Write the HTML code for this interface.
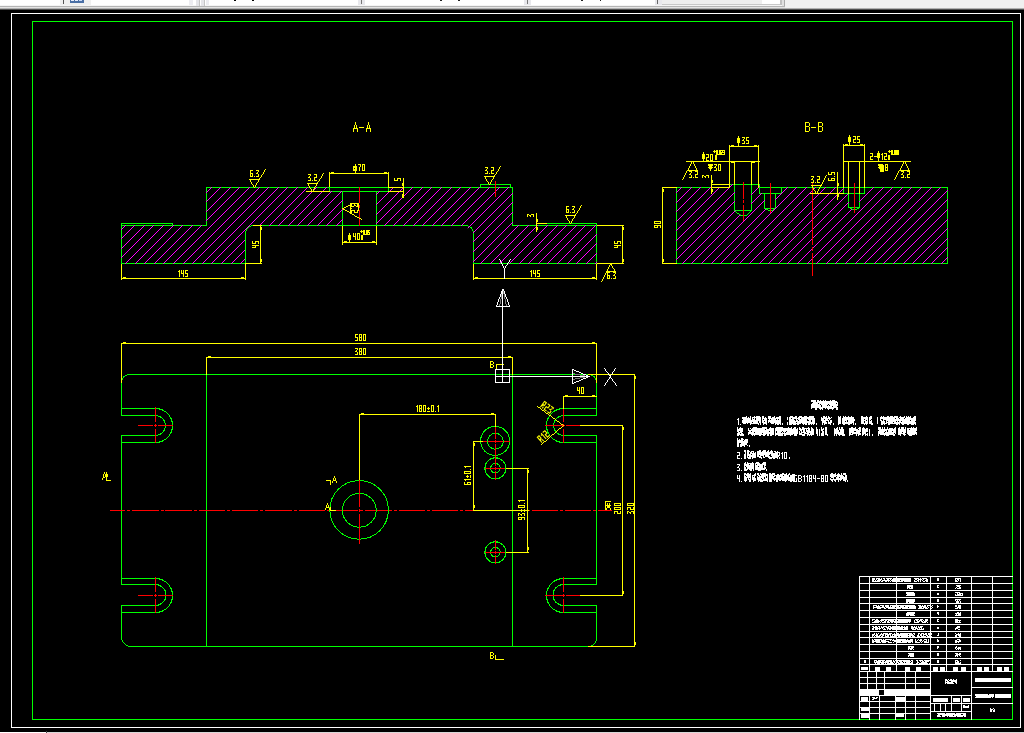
<!DOCTYPE html>
<html><head><meta charset="utf-8"><title>CAD drawing</title>
<style>
html,body{margin:0;padding:0;background:#000;font-family:"Liberation Sans",sans-serif;}
#wrap{position:relative;width:1024px;height:733px;overflow:hidden;background:#000;}
#top{position:absolute;left:0;top:0;width:1024px;height:10px;}
svg{position:absolute;left:0;top:0;}
</style></head><body>
<div id="wrap">
<svg width="1024" height="733" viewBox="0 0 1024 733" shape-rendering="crispEdges" stroke-width="1">
<defs><clipPath id="ca"><path d="M121 225H206V187H330V191H343V226H253L245 234V264H121Z M376 191H388V187H513V225H597V264H473V233L465 226H376Z"/></clipPath><clipPath id="cb"><path clip-rule="evenodd" d="M676 187H729V184H760V187H948V264H676Z M735 184H751V210L746 215H741L735 210Z M760 187H781V193H775V208L770 211L765 208V193H760Z M844 187H864V193H859V207L854 210L849 207V193H844Z"/></clipPath>
<linearGradient id="tg" x1="0" y1="0" x2="0" y2="1"><stop offset="0" stop-color="#fff"/><stop offset="1" stop-color="#fff"/></linearGradient>
</defs>
<rect x="0" y="0" width="1024" height="733" fill="#000"/>
<!-- top toolbar strip -->
<rect x="0" y="0" width="785" height="6" fill="#ffffff"/>
<rect x="785" y="0" width="239" height="8" fill="#f0f0f0"/>
<rect x="0" y="5" width="785" height="1" fill="#f4f4f4"/>
<rect x="0" y="6" width="785" height="1" fill="#b4b4b4"/>
<rect x="0" y="7" width="785" height="1" fill="#e4e4e4"/>
<rect x="0" y="8" width="1024" height="1" fill="#b0b0b0"/>
<rect x="0" y="9" width="1024" height="1" fill="#505050"/>
<rect x="60" y="0" width="31" height="5" fill="#f0f0f0"/>
<rect x="63" y="0" width="1" height="4" fill="#555"/>
<rect x="70" y="0" width="14" height="3" fill="#4a6fa5"/>
<rect x="71" y="0" width="3" height="1" fill="#e8eefc"/><rect x="75" y="0" width="3" height="1" fill="#e8eefc"/><rect x="79" y="0" width="3" height="1" fill="#c8d8f8"/>
<rect x="189" y="0" width="4" height="5" fill="#ececf0"/><rect x="196" y="0" width="3" height="6" fill="#e4e4e8"/><rect x="199" y="0" width="1" height="6" fill="#c4c4c4"/>
<rect x="201" y="0" width="3" height="6" fill="#e4e4e8"/><rect x="204" y="0" width="1" height="6" fill="#c4c4c4"/><rect x="206" y="0" width="3" height="5" fill="#ececf0"/>
<rect x="234" y="0" width="2" height="1" fill="#000"/><rect x="252" y="0" width="2" height="1" fill="#000"/>
<rect x="358" y="0" width="7" height="5" fill="#e8e8ec"/><rect x="361" y="0" width="1" height="4" fill="#777"/>
<rect x="440" y="0" width="2" height="1" fill="#222"/><rect x="458" y="0" width="2" height="1" fill="#222"/>
<rect x="524" y="0" width="7" height="5" fill="#e8e8ec"/><rect x="527" y="0" width="1" height="4" fill="#777"/>
<rect x="581" y="0" width="2" height="1" fill="#222"/><rect x="600" y="0" width="1" height="1" fill="#222"/>
<rect x="655" y="0" width="7" height="5" fill="#e8e8ec"/><rect x="657" y="0" width="1" height="4" fill="#666"/>
<rect x="662" y="0" width="100" height="4" fill="#eeeeee"/><rect x="662" y="4" width="120" height="1" fill="#c8c8c8"/>
<rect x="780" y="0" width="2" height="5" fill="#c0c0c0"/><rect x="782" y="0" width="3" height="6" fill="#e0e0e0"/><rect x="784" y="0" width="1" height="6" fill="#aaa"/>
<!-- bottom row -->
<rect x="0" y="732" width="46" height="1" fill="#ffffff"/><rect x="46" y="731" width="1" height="2" fill="#444"/><rect x="47" y="732" width="977" height="1" fill="#d8d8d8"/>
<!-- frames -->
<rect x="11.5" y="13.5" width="1009" height="714" stroke="#fff" fill="none"/>
<rect x="32.5" y="21.5" width="980" height="698" stroke="#00ff00" fill="none"/>
<rect x="121" y="223" width="52" height="1" fill="#00ff00"/>
<rect x="172" y="223" width="1" height="3" fill="#00ff00"/>
<rect x="121" y="223" width="1" height="41" fill="#00ff00"/>
<rect x="121" y="225" width="86" height="1" fill="#00ff00"/>
<rect x="121" y="263" width="125" height="1" fill="#00ff00"/>
<rect x="245" y="233" width="1" height="31" fill="#00ff00"/>
<path d="M245.5 233.5A8 8 0 0 1 253.5 225.5" stroke="#00ff00" fill="none" />
<rect x="253" y="225" width="213" height="1" fill="#00ff00"/>
<rect x="206" y="187" width="1" height="39" fill="#00ff00"/>
<rect x="206" y="187" width="307" height="1" fill="#00ff00"/>
<rect x="329" y="187" width="1" height="5" fill="#00ff00"/>
<rect x="329" y="191" width="60" height="1" fill="#00ff00"/>
<rect x="388" y="187" width="1" height="5" fill="#00ff00"/>
<rect x="342" y="191" width="1" height="35" fill="#00ff00"/>
<rect x="376" y="191" width="1" height="35" fill="#00ff00"/>
<rect x="480" y="184" width="31" height="1" fill="#00ff00"/>
<rect x="480" y="184" width="1" height="4" fill="#00ff00"/>
<rect x="510" y="184" width="1" height="4" fill="#00ff00"/>
<rect x="512" y="187" width="1" height="39" fill="#00ff00"/>
<rect x="512" y="225" width="85" height="1" fill="#00ff00"/>
<rect x="546" y="223" width="51" height="1" fill="#00ff00"/>
<rect x="596" y="223" width="1" height="41" fill="#00ff00"/>
<rect x="473" y="263" width="124" height="1" fill="#00ff00"/>
<rect x="473" y="233" width="1" height="31" fill="#00ff00"/>
<path d="M473.5 233.5A8 8 0 0 0 465.5 225.5" stroke="#00ff00" fill="none" />
<path clip-path="url(#ca)" fill="#ff00ff" d="M27.4 265h1L110.4 183h-1zM37.0 265h1L120.0 183h-1zM46.6 265h1L129.6 183h-1zM56.2 265h1L139.2 183h-1zM65.8 265h1L148.8 183h-1zM75.4 265h1L158.4 183h-1zM85.0 265h1L168.0 183h-1zM94.6 265h1L177.6 183h-1zM104.2 265h1L187.2 183h-1zM113.8 265h1L196.8 183h-1zM123.4 265h1L206.4 183h-1zM133.0 265h1L216.0 183h-1zM142.6 265h1L225.6 183h-1zM152.2 265h1L235.2 183h-1zM161.8 265h1L244.8 183h-1zM171.4 265h1L254.4 183h-1zM181.0 265h1L264.0 183h-1zM190.6 265h1L273.6 183h-1zM200.2 265h1L283.2 183h-1zM209.8 265h1L292.8 183h-1zM219.4 265h1L302.4 183h-1zM229.0 265h1L312.0 183h-1zM238.6 265h1L321.6 183h-1zM248.2 265h1L331.2 183h-1zM257.8 265h1L340.8 183h-1zM267.4 265h1L350.4 183h-1zM277.0 265h1L360.0 183h-1zM286.6 265h1L369.6 183h-1zM296.2 265h1L379.2 183h-1zM305.8 265h1L388.8 183h-1zM315.4 265h1L398.4 183h-1zM325.0 265h1L408.0 183h-1zM334.6 265h1L417.6 183h-1zM344.2 265h1L427.2 183h-1zM353.8 265h1L436.8 183h-1zM363.4 265h1L446.4 183h-1zM373.0 265h1L456.0 183h-1zM382.6 265h1L465.6 183h-1zM392.2 265h1L475.2 183h-1zM401.8 265h1L484.8 183h-1zM411.4 265h1L494.4 183h-1zM421.0 265h1L504.0 183h-1zM430.6 265h1L513.6 183h-1zM440.2 265h1L523.2 183h-1zM449.8 265h1L532.8 183h-1zM459.4 265h1L542.4 183h-1zM469.0 265h1L552.0 183h-1zM478.6 265h1L561.6 183h-1zM488.2 265h1L571.2 183h-1zM497.8 265h1L580.8 183h-1zM507.4 265h1L590.4 183h-1zM517.0 265h1L600.0 183h-1zM526.6 265h1L609.6 183h-1zM536.2 265h1L619.2 183h-1zM545.8 265h1L628.8 183h-1zM555.4 265h1L638.4 183h-1zM565.0 265h1L648.0 183h-1zM574.6 265h1L657.6 183h-1zM584.2 265h1L667.2 183h-1zM593.8 265h1L676.8 183h-1zM603.4 265h1L686.4 183h-1zM613.0 265h1L696.0 183h-1z"/>
<rect x="359" y="187" width="1" height="16" fill="#ff0000"/>
<rect x="359" y="205" width="1" height="3" fill="#ff0000"/>
<rect x="359" y="210" width="1" height="16" fill="#ff0000"/>
<rect x="495" y="181" width="1" height="16" fill="#ff0000"/>
<rect x="355" y="122" width="1" height="3" fill="#ffff00"/>
<rect x="354" y="125" width="1" height="3" fill="#ffff00"/>
<rect x="356" y="125" width="1" height="3" fill="#ffff00"/>
<rect x="353" y="128" width="5" height="1" fill="#ffff00"/>
<rect x="353" y="129" width="1" height="3" fill="#ffff00"/>
<rect x="357" y="129" width="1" height="3" fill="#ffff00"/>
<rect x="359" y="127" width="5" height="1" fill="#ffff00"/>
<rect x="368" y="122" width="1" height="3" fill="#ffff00"/>
<rect x="367" y="125" width="1" height="3" fill="#ffff00"/>
<rect x="369" y="125" width="1" height="3" fill="#ffff00"/>
<rect x="366" y="128" width="5" height="1" fill="#ffff00"/>
<rect x="366" y="129" width="1" height="3" fill="#ffff00"/>
<rect x="370" y="129" width="1" height="3" fill="#ffff00"/>
<path d="M248.69 179L254.31 188H255.31L249.69 179Z" fill="#ffff00"/>
<path d="M265.31 169L253.69 188H254.69L266.31 169Z" fill="#ffff00"/>
<rect x="249" y="179" width="11" height="1" fill="#ffff00"/>
<path d="M250 170h1v1h-1zM251 170h1v1h-1zM252 170h1v1h-1zM250 171h1v1h-1zM250 172h1v1h-1zM250 173h1v1h-1zM251 173h1v1h-1zM252 173h1v1h-1zM250 174h1v1h-1zM252 174h1v1h-1zM250 175h1v1h-1zM252 175h1v1h-1zM250 176h1v1h-1zM251 176h1v1h-1zM252 176h1v1h-1zM254 176h1v1h-1zM256 170h1v1h-1zM257 170h1v1h-1zM258 170h1v1h-1zM258 171h1v1h-1zM257 172h1v1h-1zM256 173h1v1h-1zM257 173h1v1h-1zM258 174h1v1h-1zM258 175h1v1h-1zM256 176h1v1h-1zM257 176h1v1h-1zM258 176h1v1h-1z" fill="#ffff00"/>
<rect x="306" y="191" width="24" height="1" fill="#ffff00"/>
<path d="M306.69 183L312.31 192H313.31L307.69 183Z" fill="#ffff00"/>
<path d="M323.31 173L311.69 192H312.69L324.31 173Z" fill="#ffff00"/>
<rect x="307" y="183" width="11" height="1" fill="#ffff00"/>
<path d="M308 174h1v1h-1zM309 174h1v1h-1zM310 174h1v1h-1zM310 175h1v1h-1zM309 176h1v1h-1zM308 177h1v1h-1zM309 177h1v1h-1zM310 178h1v1h-1zM310 179h1v1h-1zM308 180h1v1h-1zM309 180h1v1h-1zM310 180h1v1h-1zM312 180h1v1h-1zM314 174h1v1h-1zM315 174h1v1h-1zM316 174h1v1h-1zM316 175h1v1h-1zM316 176h1v1h-1zM314 177h1v1h-1zM315 177h1v1h-1zM316 177h1v1h-1zM314 178h1v1h-1zM314 179h1v1h-1zM314 180h1v1h-1zM315 180h1v1h-1zM316 180h1v1h-1z" fill="#ffff00"/>
<rect x="329" y="172" width="1" height="15" fill="#ffff00"/>
<rect x="388" y="172" width="1" height="15" fill="#ffff00"/>
<rect x="329" y="173" width="60" height="1" fill="#ffff00"/>
<rect x="331" y="172" width="3" height="1" fill="#ffff00"/>
<rect x="384" y="172" width="3" height="1" fill="#ffff00"/>
<rect x="353" y="166" width="4" height="5" fill="#ffff00"/>
<rect x="354" y="168" width="1" height="1" fill="#000"/>
<rect x="355" y="164" width="1" height="10" fill="#ffff00"/>
<path d="M358 164h1v1h-1zM359 164h1v1h-1zM360 164h1v1h-1zM360 165h1v1h-1zM360 166h1v1h-1zM359 167h1v1h-1zM359 168h1v1h-1zM359 169h1v1h-1zM359 170h1v1h-1zM362 164h1v1h-1zM363 164h1v1h-1zM364 164h1v1h-1zM362 165h1v1h-1zM364 165h1v1h-1zM362 166h1v1h-1zM364 166h1v1h-1zM362 167h1v1h-1zM364 167h1v1h-1zM362 168h1v1h-1zM364 168h1v1h-1zM362 169h1v1h-1zM364 169h1v1h-1zM362 170h1v1h-1zM363 170h1v1h-1zM364 170h1v1h-1z" fill="#ffff00"/>
<rect x="403" y="178" width="1" height="20" fill="#ffff00"/>
<rect x="388" y="187" width="16" height="1" fill="#ffff00"/>
<rect x="388" y="191" width="16" height="1" fill="#ffff00"/>
<rect x="402" y="183" width="1" height="3" fill="#ffff00"/>
<rect x="402" y="194" width="1" height="4" fill="#ffff00"/>
<path d="M394 180h1v1h-1zM394 179h1v1h-1zM394 178h1v1h-1zM395 180h1v1h-1zM396 180h1v1h-1zM397 180h1v1h-1zM397 179h1v1h-1zM397 178h1v1h-1zM398 178h1v1h-1zM399 178h1v1h-1zM400 180h1v1h-1zM400 179h1v1h-1zM400 178h1v1h-1z" fill="#ffff00"/>
<path d="M342 208.25L351 203.75V204.75L342 209.25Z" fill="#ffff00"/>
<rect x="350" y="204" width="1" height="10" fill="#ffff00"/>
<path d="M342 207.71L362 219.29V220.29L342 208.71Z" fill="#ffff00"/>
<rect x="350" y="203" width="8" height="1" fill="#ffff00"/>
<path d="M357 204h1v1h-1zM357 205h1v1h-1zM357 206h1v1h-1zM356 206h1v1h-1zM355 205h1v1h-1zM354 204h1v1h-1zM354 205h1v1h-1zM353 206h1v1h-1zM352 206h1v1h-1zM351 204h1v1h-1zM351 205h1v1h-1zM351 206h1v1h-1zM351 208h1v1h-1zM357 210h1v1h-1zM357 211h1v1h-1zM357 212h1v1h-1zM356 212h1v1h-1zM355 212h1v1h-1zM354 210h1v1h-1zM354 211h1v1h-1zM354 212h1v1h-1zM353 210h1v1h-1zM352 210h1v1h-1zM351 210h1v1h-1zM351 211h1v1h-1zM351 212h1v1h-1z" fill="#ffff00"/>
<rect x="358" y="203" width="1" height="8" fill="#ffff00"/>
<rect x="342" y="226" width="1" height="19" fill="#ffff00"/>
<rect x="376" y="226" width="1" height="19" fill="#ffff00"/>
<rect x="342" y="242" width="35" height="1" fill="#ffff00"/>
<rect x="344" y="241" width="3" height="1" fill="#ffff00"/>
<rect x="372" y="241" width="3" height="1" fill="#ffff00"/>
<rect x="348" y="235" width="3" height="5" fill="#ffff00"/>
<rect x="349" y="233" width="1" height="10" fill="#ffff00"/>
<path d="M353 233h1v1h-1zM355 233h1v1h-1zM353 234h1v1h-1zM355 234h1v1h-1zM353 235h1v1h-1zM355 235h1v1h-1zM353 236h1v1h-1zM354 236h1v1h-1zM355 236h1v1h-1zM355 237h1v1h-1zM355 238h1v1h-1zM355 239h1v1h-1zM357 233h1v1h-1zM358 233h1v1h-1zM359 233h1v1h-1zM357 234h1v1h-1zM359 234h1v1h-1zM357 235h1v1h-1zM359 235h1v1h-1zM357 236h1v1h-1zM359 236h1v1h-1zM357 237h1v1h-1zM359 237h1v1h-1zM357 238h1v1h-1zM359 238h1v1h-1zM357 239h1v1h-1zM358 239h1v1h-1zM359 239h1v1h-1z" fill="#ffff00"/>
<path d="M361 235h1v1h-1zM362 235h1v1h-1zM361 236h1v1h-1zM362 236h1v1h-1zM361 237h1v1h-1zM362 237h1v1h-1zM361 238h1v1h-1zM362 238h1v1h-1zM361 239h1v1h-1zM362 239h1v1h-1z" fill="#ffff00"/>
<path d="M361 230h1v1h-1zM360 231h1v1h-1zM361 231h1v1h-1zM362 231h1v1h-1zM361 232h1v1h-1zM363 230h1v1h-1zM364 230h1v1h-1zM363 231h1v1h-1zM364 231h1v1h-1zM363 232h1v1h-1zM364 232h1v1h-1zM363 233h1v1h-1zM364 233h1v1h-1zM363 234h1v1h-1zM364 234h1v1h-1zM365 234h1v1h-1zM366 230h1v1h-1zM367 230h1v1h-1zM366 231h1v1h-1zM367 231h1v1h-1zM366 232h1v1h-1zM367 232h1v1h-1zM366 233h1v1h-1zM367 233h1v1h-1zM366 234h1v1h-1zM367 234h1v1h-1zM368 230h1v1h-1zM369 230h1v1h-1zM368 231h1v1h-1zM368 232h1v1h-1zM369 232h1v1h-1zM369 233h1v1h-1zM368 234h1v1h-1zM369 234h1v1h-1z" fill="#ffff00"/>
<rect x="253" y="225" width="9" height="1" fill="#ffff00"/>
<rect x="245" y="263" width="17" height="1" fill="#ffff00"/>
<rect x="260" y="225" width="1" height="39" fill="#ffff00"/>
<rect x="261" y="227" width="1" height="3" fill="#ffff00"/>
<rect x="261" y="259" width="1" height="3" fill="#ffff00"/>
<path d="M252 247h1v1h-1zM252 245h1v1h-1zM253 247h1v1h-1zM253 245h1v1h-1zM254 247h1v1h-1zM254 245h1v1h-1zM255 247h1v1h-1zM255 246h1v1h-1zM255 245h1v1h-1zM256 245h1v1h-1zM257 245h1v1h-1zM258 245h1v1h-1zM252 243h1v1h-1zM252 242h1v1h-1zM252 241h1v1h-1zM253 243h1v1h-1zM254 243h1v1h-1zM255 243h1v1h-1zM255 242h1v1h-1zM255 241h1v1h-1zM256 241h1v1h-1zM257 241h1v1h-1zM258 243h1v1h-1zM258 242h1v1h-1zM258 241h1v1h-1z" fill="#ffff00"/>
<rect x="121" y="264" width="1" height="16" fill="#ffff00"/>
<rect x="245" y="264" width="1" height="16" fill="#ffff00"/>
<rect x="121" y="278" width="125" height="1" fill="#ffff00"/>
<rect x="123" y="277" width="3" height="1" fill="#ffff00"/>
<rect x="241" y="277" width="3" height="1" fill="#ffff00"/>
<path d="M179 270h1v1h-1zM178 271h1v1h-1zM179 271h1v1h-1zM179 272h1v1h-1zM179 273h1v1h-1zM179 274h1v1h-1zM179 275h1v1h-1zM179 276h1v1h-1zM181 270h1v1h-1zM183 270h1v1h-1zM181 271h1v1h-1zM183 271h1v1h-1zM181 272h1v1h-1zM183 272h1v1h-1zM181 273h1v1h-1zM182 273h1v1h-1zM183 273h1v1h-1zM183 274h1v1h-1zM183 275h1v1h-1zM183 276h1v1h-1zM185 270h1v1h-1zM186 270h1v1h-1zM187 270h1v1h-1zM185 271h1v1h-1zM185 272h1v1h-1zM185 273h1v1h-1zM186 273h1v1h-1zM187 273h1v1h-1zM187 274h1v1h-1zM187 275h1v1h-1zM185 276h1v1h-1zM186 276h1v1h-1zM187 276h1v1h-1z" fill="#ffff00"/>
<path d="M483.69 176L489.31 185H490.31L484.69 176Z" fill="#ffff00"/>
<path d="M500.31 166L488.69 185H489.69L501.31 166Z" fill="#ffff00"/>
<rect x="484" y="176" width="11" height="1" fill="#ffff00"/>
<path d="M485 167h1v1h-1zM486 167h1v1h-1zM487 167h1v1h-1zM487 168h1v1h-1zM486 169h1v1h-1zM485 170h1v1h-1zM486 170h1v1h-1zM487 171h1v1h-1zM487 172h1v1h-1zM485 173h1v1h-1zM486 173h1v1h-1zM487 173h1v1h-1zM489 173h1v1h-1zM491 167h1v1h-1zM492 167h1v1h-1zM493 167h1v1h-1zM493 168h1v1h-1zM493 169h1v1h-1zM491 170h1v1h-1zM492 170h1v1h-1zM493 170h1v1h-1zM491 171h1v1h-1zM491 172h1v1h-1zM491 173h1v1h-1zM492 173h1v1h-1zM493 173h1v1h-1z" fill="#ffff00"/>
<rect x="536" y="213" width="1" height="19" fill="#ffff00"/>
<rect x="536" y="223" width="11" height="1" fill="#ffff00"/>
<path d="M527 216h1v1h-1zM527 215h1v1h-1zM527 214h1v1h-1zM528 214h1v1h-1zM529 215h1v1h-1zM530 216h1v1h-1zM530 215h1v1h-1zM531 214h1v1h-1zM532 214h1v1h-1zM533 216h1v1h-1zM533 215h1v1h-1zM533 214h1v1h-1z" fill="#ffff00"/>
<rect x="537" y="219" width="1" height="3" fill="#ffff00"/>
<rect x="537" y="227" width="1" height="3" fill="#ffff00"/>
<path d="M564.69 215L570.31 224H571.31L565.69 215Z" fill="#ffff00"/>
<path d="M581.31 205L569.69 224H570.69L582.31 205Z" fill="#ffff00"/>
<rect x="565" y="215" width="11" height="1" fill="#ffff00"/>
<path d="M566 206h1v1h-1zM567 206h1v1h-1zM568 206h1v1h-1zM566 207h1v1h-1zM566 208h1v1h-1zM566 209h1v1h-1zM567 209h1v1h-1zM568 209h1v1h-1zM566 210h1v1h-1zM568 210h1v1h-1zM566 211h1v1h-1zM568 211h1v1h-1zM566 212h1v1h-1zM567 212h1v1h-1zM568 212h1v1h-1zM570 212h1v1h-1zM572 206h1v1h-1zM573 206h1v1h-1zM574 206h1v1h-1zM574 207h1v1h-1zM573 208h1v1h-1zM572 209h1v1h-1zM573 209h1v1h-1zM574 210h1v1h-1zM574 211h1v1h-1zM572 212h1v1h-1zM573 212h1v1h-1zM574 212h1v1h-1z" fill="#ffff00"/>
<rect x="597" y="225" width="27" height="1" fill="#ffff00"/>
<rect x="597" y="263" width="27" height="1" fill="#ffff00"/>
<rect x="622" y="225" width="1" height="39" fill="#ffff00"/>
<rect x="623" y="227" width="1" height="3" fill="#ffff00"/>
<rect x="623" y="259" width="1" height="3" fill="#ffff00"/>
<path d="M614 247h1v1h-1zM614 245h1v1h-1zM615 247h1v1h-1zM615 245h1v1h-1zM616 247h1v1h-1zM616 245h1v1h-1zM617 247h1v1h-1zM617 246h1v1h-1zM617 245h1v1h-1zM618 245h1v1h-1zM619 245h1v1h-1zM620 245h1v1h-1zM614 243h1v1h-1zM614 242h1v1h-1zM614 241h1v1h-1zM615 243h1v1h-1zM616 243h1v1h-1zM617 243h1v1h-1zM617 242h1v1h-1zM617 241h1v1h-1zM618 241h1v1h-1zM619 241h1v1h-1zM620 243h1v1h-1zM620 242h1v1h-1zM620 241h1v1h-1z" fill="#ffff00"/>
<rect x="473" y="264" width="1" height="16" fill="#ffff00"/>
<rect x="596" y="264" width="1" height="16" fill="#ffff00"/>
<rect x="473" y="278" width="124" height="1" fill="#ffff00"/>
<rect x="475" y="277" width="3" height="1" fill="#ffff00"/>
<rect x="592" y="277" width="3" height="1" fill="#ffff00"/>
<path d="M531 270h1v1h-1zM530 271h1v1h-1zM531 271h1v1h-1zM531 272h1v1h-1zM531 273h1v1h-1zM531 274h1v1h-1zM531 275h1v1h-1zM531 276h1v1h-1zM533 270h1v1h-1zM535 270h1v1h-1zM533 271h1v1h-1zM535 271h1v1h-1zM533 272h1v1h-1zM535 272h1v1h-1zM533 273h1v1h-1zM534 273h1v1h-1zM535 273h1v1h-1zM535 274h1v1h-1zM535 275h1v1h-1zM535 276h1v1h-1zM537 270h1v1h-1zM538 270h1v1h-1zM539 270h1v1h-1zM537 271h1v1h-1zM537 272h1v1h-1zM537 273h1v1h-1zM538 273h1v1h-1zM539 273h1v1h-1zM539 274h1v1h-1zM539 275h1v1h-1zM537 276h1v1h-1zM538 276h1v1h-1zM539 276h1v1h-1z" fill="#ffff00"/>
<path d="M609.69 263L615.31 272H616.31L610.69 263Z" fill="#ffff00"/>
<path d="M610.25 263L600.75 282H601.75L611.25 263Z" fill="#ffff00"/>
<rect x="606" y="271" width="10" height="1" fill="#ffff00"/>
<path d="M607 272h1v1h-1zM608 272h1v1h-1zM609 272h1v1h-1zM607 273h1v1h-1zM607 274h1v1h-1zM607 275h1v1h-1zM608 275h1v1h-1zM609 275h1v1h-1zM607 276h1v1h-1zM609 276h1v1h-1zM607 277h1v1h-1zM609 277h1v1h-1zM607 278h1v1h-1zM608 278h1v1h-1zM609 278h1v1h-1zM611 278h1v1h-1zM613 272h1v1h-1zM614 272h1v1h-1zM615 272h1v1h-1zM615 273h1v1h-1zM614 274h1v1h-1zM613 275h1v1h-1zM614 275h1v1h-1zM615 276h1v1h-1zM615 277h1v1h-1zM613 278h1v1h-1zM614 278h1v1h-1zM615 278h1v1h-1z" fill="#ffff00"/>
<rect x="676" y="187" width="54" height="1" fill="#00ff00"/>
<rect x="729" y="184" width="1" height="4" fill="#00ff00"/>
<rect x="729" y="184" width="31" height="1" fill="#00ff00"/>
<rect x="759" y="184" width="1" height="4" fill="#00ff00"/>
<rect x="759" y="187" width="189" height="1" fill="#00ff00"/>
<rect x="676" y="187" width="1" height="77" fill="#00ff00"/>
<rect x="947" y="187" width="1" height="77" fill="#00ff00"/>
<rect x="676" y="263" width="272" height="1" fill="#00ff00"/>
<rect x="734" y="184" width="1" height="27" fill="#00ff00"/>
<rect x="751" y="184" width="1" height="27" fill="#00ff00"/>
<rect x="734" y="210" width="18" height="1" fill="#00ff00"/>
<path d="M734 209.58L741 215.42V216.42L734 210.58Z" fill="#00ff00"/>
<rect x="740" y="215" width="7" height="1" fill="#00ff00"/>
<path d="M746 215.50L752 209.50V210.50L746 216.50Z" fill="#00ff00"/>
<rect x="759" y="187" width="1" height="7" fill="#00ff00"/>
<rect x="759" y="193" width="23" height="1" fill="#00ff00"/>
<rect x="781" y="187" width="1" height="7" fill="#00ff00"/>
<rect x="764" y="193" width="1" height="16" fill="#00ff00"/>
<rect x="775" y="193" width="1" height="16" fill="#00ff00"/>
<rect x="764" y="208" width="12" height="1" fill="#00ff00"/>
<path d="M764 207.75L771 211.25V212.25L764 208.75Z" fill="#00ff00"/>
<path d="M770 211.30L776 207.70V208.70L770 212.30Z" fill="#00ff00"/>
<rect x="843" y="187" width="1" height="7" fill="#00ff00"/>
<rect x="864" y="187" width="1" height="7" fill="#00ff00"/>
<rect x="843" y="193" width="22" height="1" fill="#00ff00"/>
<rect x="848" y="193" width="1" height="15" fill="#00ff00"/>
<rect x="859" y="193" width="1" height="15" fill="#00ff00"/>
<rect x="848" y="207" width="12" height="1" fill="#00ff00"/>
<path d="M848 206.75L855 210.25V211.25L848 207.75Z" fill="#00ff00"/>
<path d="M854 210.30L860 206.70V207.70L854 211.30Z" fill="#00ff00"/>
<path clip-path="url(#cb)" fill="#ff00ff" d="M584.2 265h1L667.2 183h-1zM593.8 265h1L676.8 183h-1zM603.4 265h1L686.4 183h-1zM613.0 265h1L696.0 183h-1zM622.6 265h1L705.6 183h-1zM632.2 265h1L715.2 183h-1zM641.8 265h1L724.8 183h-1zM651.4 265h1L734.4 183h-1zM661.0 265h1L744.0 183h-1zM670.6 265h1L753.6 183h-1zM680.2 265h1L763.2 183h-1zM689.8 265h1L772.8 183h-1zM699.4 265h1L782.4 183h-1zM709.0 265h1L792.0 183h-1zM718.6 265h1L801.6 183h-1zM728.2 265h1L811.2 183h-1zM737.8 265h1L820.8 183h-1zM747.4 265h1L830.4 183h-1zM757.0 265h1L840.0 183h-1zM766.6 265h1L849.6 183h-1zM776.2 265h1L859.2 183h-1zM785.8 265h1L868.8 183h-1zM795.4 265h1L878.4 183h-1zM805.0 265h1L888.0 183h-1zM814.6 265h1L897.6 183h-1zM824.2 265h1L907.2 183h-1zM833.8 265h1L916.8 183h-1zM843.4 265h1L926.4 183h-1zM853.0 265h1L936.0 183h-1zM862.6 265h1L945.6 183h-1zM872.2 265h1L955.2 183h-1zM881.8 265h1L964.8 183h-1zM891.4 265h1L974.4 183h-1zM901.0 265h1L984.0 183h-1zM910.6 265h1L993.6 183h-1zM920.2 265h1L1003.2 183h-1zM929.8 265h1L1012.8 183h-1zM939.4 265h1L1022.4 183h-1zM949.0 265h1L1032.0 183h-1zM958.6 265h1L1041.6 183h-1z"/>
<rect x="743" y="182" width="1" height="17" fill="#ff0000"/>
<rect x="743" y="200" width="1" height="3" fill="#ff0000"/>
<rect x="743" y="205" width="1" height="16" fill="#ff0000"/>
<rect x="770" y="183" width="1" height="30" fill="#ff0000"/>
<rect x="854" y="183" width="1" height="30" fill="#ff0000"/>
<rect x="812" y="182" width="1" height="63" fill="#ff0000"/>
<rect x="812" y="247" width="1" height="4" fill="#ff0000"/>
<rect x="812" y="253" width="1" height="23" fill="#ff0000"/>
<rect x="805" y="122" width="1" height="10" fill="#ffff00"/>
<rect x="806" y="122" width="3" height="1" fill="#ffff00"/>
<rect x="809" y="123" width="1" height="3" fill="#ffff00"/>
<rect x="806" y="126" width="3" height="1" fill="#ffff00"/>
<rect x="809" y="127" width="1" height="4" fill="#ffff00"/>
<rect x="806" y="131" width="3" height="1" fill="#ffff00"/>
<rect x="811" y="127" width="5" height="1" fill="#ffff00"/>
<rect x="818" y="122" width="1" height="10" fill="#ffff00"/>
<rect x="819" y="122" width="3" height="1" fill="#ffff00"/>
<rect x="822" y="123" width="1" height="3" fill="#ffff00"/>
<rect x="819" y="126" width="3" height="1" fill="#ffff00"/>
<rect x="822" y="127" width="1" height="4" fill="#ffff00"/>
<rect x="819" y="131" width="3" height="1" fill="#ffff00"/>
<rect x="662" y="187" width="15" height="1" fill="#ffff00"/>
<rect x="662" y="263" width="15" height="1" fill="#ffff00"/>
<rect x="662" y="187" width="1" height="77" fill="#ffff00"/>
<rect x="663" y="189" width="1" height="3" fill="#ffff00"/>
<rect x="663" y="259" width="1" height="3" fill="#ffff00"/>
<path d="M654 227h1v1h-1zM654 226h1v1h-1zM654 225h1v1h-1zM655 227h1v1h-1zM655 225h1v1h-1zM656 227h1v1h-1zM656 225h1v1h-1zM657 227h1v1h-1zM657 226h1v1h-1zM657 225h1v1h-1zM658 225h1v1h-1zM659 225h1v1h-1zM660 227h1v1h-1zM660 226h1v1h-1zM660 225h1v1h-1zM654 223h1v1h-1zM654 222h1v1h-1zM654 221h1v1h-1zM655 223h1v1h-1zM655 221h1v1h-1zM656 223h1v1h-1zM656 221h1v1h-1zM657 223h1v1h-1zM657 221h1v1h-1zM658 223h1v1h-1zM658 221h1v1h-1zM659 223h1v1h-1zM659 221h1v1h-1zM660 223h1v1h-1zM660 222h1v1h-1zM660 221h1v1h-1z" fill="#ffff00"/>
<rect x="729" y="145" width="1" height="43" fill="#ffff00"/>
<rect x="758" y="145" width="1" height="43" fill="#ffff00"/>
<rect x="729" y="146" width="30" height="1" fill="#ffff00"/>
<rect x="731" y="145" width="3" height="1" fill="#ffff00"/>
<rect x="754" y="145" width="3" height="1" fill="#ffff00"/>
<rect x="737" y="138" width="3" height="5" fill="#ffff00"/>
<rect x="738" y="136" width="1" height="11" fill="#ffff00"/>
<path d="M742 137h1v1h-1zM743 137h1v1h-1zM744 137h1v1h-1zM744 138h1v1h-1zM743 139h1v1h-1zM742 140h1v1h-1zM743 140h1v1h-1zM744 141h1v1h-1zM744 142h1v1h-1zM742 143h1v1h-1zM743 143h1v1h-1zM744 143h1v1h-1zM746 137h1v1h-1zM747 137h1v1h-1zM748 137h1v1h-1zM746 138h1v1h-1zM746 139h1v1h-1zM746 140h1v1h-1zM747 140h1v1h-1zM748 140h1v1h-1zM748 141h1v1h-1zM748 142h1v1h-1zM746 143h1v1h-1zM747 143h1v1h-1zM748 143h1v1h-1z" fill="#ffff00"/>
<rect x="686" y="161" width="74" height="1" fill="#ffff00"/>
<rect x="734" y="161" width="1" height="24" fill="#ffff00"/>
<rect x="751" y="161" width="1" height="24" fill="#ffff00"/>
<rect x="731" y="162" width="3" height="1" fill="#ffff00"/>
<rect x="752" y="162" width="3" height="1" fill="#ffff00"/>
<rect x="702" y="154" width="3" height="5" fill="#ffff00"/>
<rect x="703" y="152" width="1" height="10" fill="#ffff00"/>
<path d="M706 154h1v1h-1zM707 154h1v1h-1zM708 154h1v1h-1zM708 155h1v1h-1zM708 156h1v1h-1zM706 157h1v1h-1zM707 157h1v1h-1zM708 157h1v1h-1zM706 158h1v1h-1zM706 159h1v1h-1zM706 160h1v1h-1zM707 160h1v1h-1zM708 160h1v1h-1zM710 154h1v1h-1zM711 154h1v1h-1zM712 154h1v1h-1zM710 155h1v1h-1zM712 155h1v1h-1zM710 156h1v1h-1zM712 156h1v1h-1zM710 157h1v1h-1zM712 157h1v1h-1zM710 158h1v1h-1zM712 158h1v1h-1zM710 159h1v1h-1zM712 159h1v1h-1zM710 160h1v1h-1zM711 160h1v1h-1zM712 160h1v1h-1z" fill="#ffff00"/>
<path d="M715 155h1v1h-1zM716 155h1v1h-1zM715 156h1v1h-1zM716 156h1v1h-1zM715 157h1v1h-1zM716 157h1v1h-1zM715 158h1v1h-1zM716 158h1v1h-1zM715 159h1v1h-1zM716 159h1v1h-1z" fill="#ffff00"/>
<path d="M714 150h1v1h-1zM713 151h1v1h-1zM714 151h1v1h-1zM715 151h1v1h-1zM714 152h1v1h-1zM716 150h1v1h-1zM717 150h1v1h-1zM716 151h1v1h-1zM717 151h1v1h-1zM716 152h1v1h-1zM717 152h1v1h-1zM716 153h1v1h-1zM717 153h1v1h-1zM716 154h1v1h-1zM717 154h1v1h-1zM718 154h1v1h-1zM719 150h1v1h-1zM720 150h1v1h-1zM719 151h1v1h-1zM720 151h1v1h-1zM719 152h1v1h-1zM720 152h1v1h-1zM719 153h1v1h-1zM720 153h1v1h-1zM719 154h1v1h-1zM720 154h1v1h-1zM721 150h1v1h-1zM722 150h1v1h-1zM722 151h1v1h-1zM721 152h1v1h-1zM722 152h1v1h-1zM721 153h1v1h-1zM721 154h1v1h-1zM722 154h1v1h-1zM723 150h1v1h-1zM724 150h1v1h-1zM724 151h1v1h-1zM723 152h1v1h-1zM724 152h1v1h-1zM724 153h1v1h-1zM723 154h1v1h-1zM724 154h1v1h-1z" fill="#ffff00"/>
<path d="M708 164h1v1h-1zM709 164h1v1h-1zM710 164h1v1h-1zM711 164h1v1h-1zM712 164h1v1h-1zM708 165h1v1h-1zM709 165h1v1h-1zM710 165h1v1h-1zM711 165h1v1h-1zM712 165h1v1h-1zM709 166h1v1h-1zM710 166h1v1h-1zM711 166h1v1h-1zM708 167h1v1h-1zM709 167h1v1h-1zM710 167h1v1h-1zM711 167h1v1h-1zM712 167h1v1h-1zM709 168h1v1h-1zM710 168h1v1h-1zM711 168h1v1h-1zM710 169h1v1h-1zM710 170h1v1h-1z" fill="#ffff00"/>
<path d="M714 164h1v1h-1zM715 164h1v1h-1zM716 164h1v1h-1zM716 165h1v1h-1zM715 166h1v1h-1zM714 167h1v1h-1zM715 167h1v1h-1zM716 168h1v1h-1zM716 169h1v1h-1zM714 170h1v1h-1zM715 170h1v1h-1zM716 170h1v1h-1zM718 164h1v1h-1zM719 164h1v1h-1zM720 164h1v1h-1zM718 165h1v1h-1zM720 165h1v1h-1zM718 166h1v1h-1zM720 166h1v1h-1zM718 167h1v1h-1zM720 167h1v1h-1zM718 168h1v1h-1zM720 168h1v1h-1zM718 169h1v1h-1zM720 169h1v1h-1zM718 170h1v1h-1zM719 170h1v1h-1zM720 170h1v1h-1z" fill="#ffff00"/>
<path d="M691.72 161L697.28 171H698.28L692.72 161Z" fill="#ffff00"/>
<path d="M692.28 161L681.72 180H682.72L693.28 161Z" fill="#ffff00"/>
<rect x="688" y="170" width="10" height="1" fill="#ffff00"/>
<path d="M689 171h1v1h-1zM690 171h1v1h-1zM691 171h1v1h-1zM691 172h1v1h-1zM690 173h1v1h-1zM689 174h1v1h-1zM690 174h1v1h-1zM691 175h1v1h-1zM691 176h1v1h-1zM689 177h1v1h-1zM690 177h1v1h-1zM691 177h1v1h-1zM693 177h1v1h-1zM695 171h1v1h-1zM696 171h1v1h-1zM697 171h1v1h-1zM697 172h1v1h-1zM697 173h1v1h-1zM695 174h1v1h-1zM696 174h1v1h-1zM697 174h1v1h-1zM695 175h1v1h-1zM695 176h1v1h-1zM695 177h1v1h-1zM696 177h1v1h-1zM697 177h1v1h-1z" fill="#ffff00"/>
<rect x="711" y="175" width="1" height="19" fill="#ffff00"/>
<rect x="711" y="184" width="19" height="1" fill="#ffff00"/>
<rect x="711" y="187" width="19" height="1" fill="#ffff00"/>
<path d="M702 177h1v1h-1zM702 176h1v1h-1zM702 175h1v1h-1zM703 175h1v1h-1zM704 176h1v1h-1zM705 177h1v1h-1zM705 176h1v1h-1zM706 175h1v1h-1zM707 175h1v1h-1zM708 177h1v1h-1zM708 176h1v1h-1zM708 175h1v1h-1z" fill="#ffff00"/>
<rect x="712" y="180" width="1" height="3" fill="#ffff00"/>
<rect x="712" y="189" width="1" height="3" fill="#ffff00"/>
<rect x="843" y="144" width="1" height="44" fill="#ffff00"/>
<rect x="864" y="144" width="1" height="44" fill="#ffff00"/>
<rect x="843" y="145" width="22" height="1" fill="#ffff00"/>
<rect x="845" y="144" width="3" height="1" fill="#ffff00"/>
<rect x="860" y="144" width="3" height="1" fill="#ffff00"/>
<rect x="848" y="137" width="3" height="5" fill="#ffff00"/>
<rect x="849" y="135" width="1" height="11" fill="#ffff00"/>
<path d="M853 136h1v1h-1zM854 136h1v1h-1zM855 136h1v1h-1zM855 137h1v1h-1zM855 138h1v1h-1zM853 139h1v1h-1zM854 139h1v1h-1zM855 139h1v1h-1zM853 140h1v1h-1zM853 141h1v1h-1zM853 142h1v1h-1zM854 142h1v1h-1zM855 142h1v1h-1zM857 136h1v1h-1zM858 136h1v1h-1zM859 136h1v1h-1zM857 137h1v1h-1zM857 138h1v1h-1zM857 139h1v1h-1zM858 139h1v1h-1zM859 139h1v1h-1zM859 140h1v1h-1zM859 141h1v1h-1zM857 142h1v1h-1zM858 142h1v1h-1zM859 142h1v1h-1z" fill="#ffff00"/>
<rect x="843" y="161" width="68" height="1" fill="#ffff00"/>
<rect x="848" y="161" width="1" height="33" fill="#ffff00"/>
<rect x="859" y="161" width="1" height="33" fill="#ffff00"/>
<path d="M870 153h1v1h-1zM871 153h1v1h-1zM872 153h1v1h-1zM872 154h1v1h-1zM872 155h1v1h-1zM870 156h1v1h-1zM871 156h1v1h-1zM872 156h1v1h-1zM870 157h1v1h-1zM870 158h1v1h-1zM870 159h1v1h-1zM871 159h1v1h-1zM872 159h1v1h-1z" fill="#ffff00"/>
<rect x="874" y="156" width="3" height="1" fill="#ffff00"/>
<rect x="877" y="153" width="3" height="5" fill="#ffff00"/>
<rect x="878" y="151" width="1" height="11" fill="#ffff00"/>
<path d="M882 153h1v1h-1zM881 154h1v1h-1zM882 154h1v1h-1zM882 155h1v1h-1zM882 156h1v1h-1zM882 157h1v1h-1zM882 158h1v1h-1zM882 159h1v1h-1zM884 153h1v1h-1zM885 153h1v1h-1zM886 153h1v1h-1zM886 154h1v1h-1zM886 155h1v1h-1zM884 156h1v1h-1zM885 156h1v1h-1zM886 156h1v1h-1zM884 157h1v1h-1zM884 158h1v1h-1zM884 159h1v1h-1zM885 159h1v1h-1zM886 159h1v1h-1z" fill="#ffff00"/>
<path d="M888 155h1v1h-1zM889 155h1v1h-1zM888 156h1v1h-1zM889 156h1v1h-1zM888 157h1v1h-1zM889 157h1v1h-1zM888 158h1v1h-1zM889 158h1v1h-1zM888 159h1v1h-1zM889 159h1v1h-1z" fill="#ffff00"/>
<path d="M889 150h1v1h-1zM888 151h1v1h-1zM889 151h1v1h-1zM890 151h1v1h-1zM889 152h1v1h-1zM891 150h1v1h-1zM892 150h1v1h-1zM891 151h1v1h-1zM892 151h1v1h-1zM891 152h1v1h-1zM892 152h1v1h-1zM891 153h1v1h-1zM892 153h1v1h-1zM891 154h1v1h-1zM892 154h1v1h-1zM893 154h1v1h-1zM894 150h1v1h-1zM895 150h1v1h-1zM894 151h1v1h-1zM895 151h1v1h-1zM894 152h1v1h-1zM895 152h1v1h-1zM894 153h1v1h-1zM895 153h1v1h-1zM894 154h1v1h-1zM895 154h1v1h-1zM896 150h1v1h-1zM896 151h1v1h-1zM896 152h1v1h-1zM896 153h1v1h-1zM896 154h1v1h-1zM897 150h1v1h-1zM898 150h1v1h-1zM897 151h1v1h-1zM898 151h1v1h-1zM897 152h1v1h-1zM898 152h1v1h-1zM897 153h1v1h-1zM898 153h1v1h-1zM897 154h1v1h-1zM898 154h1v1h-1z" fill="#ffff00"/>
<path d="M878 164h1v1h-1zM879 164h1v1h-1zM880 164h1v1h-1zM881 164h1v1h-1zM882 164h1v1h-1zM878 165h1v1h-1zM879 165h1v1h-1zM880 165h1v1h-1zM881 165h1v1h-1zM882 165h1v1h-1zM879 166h1v1h-1zM880 166h1v1h-1zM881 166h1v1h-1zM878 167h1v1h-1zM879 167h1v1h-1zM880 167h1v1h-1zM881 167h1v1h-1zM882 167h1v1h-1zM879 168h1v1h-1zM880 168h1v1h-1zM881 168h1v1h-1zM880 169h1v1h-1zM880 170h1v1h-1z" fill="#ffff00"/>
<rect x="880" y="165" width="4" height="7" fill="#ffff00"/>
<path d="M885 164h1v1h-1zM886 164h1v1h-1zM887 164h1v1h-1zM885 165h1v1h-1zM887 165h1v1h-1zM885 166h1v1h-1zM887 166h1v1h-1zM885 167h1v1h-1zM886 167h1v1h-1zM887 167h1v1h-1zM885 168h1v1h-1zM887 168h1v1h-1zM885 169h1v1h-1zM887 169h1v1h-1zM885 170h1v1h-1zM886 170h1v1h-1zM887 170h1v1h-1z" fill="#ffff00"/>
<path d="M903.72 161L909.28 171H910.28L904.72 161Z" fill="#ffff00"/>
<path d="M904.28 161L893.72 180H894.72L905.28 161Z" fill="#ffff00"/>
<rect x="900" y="170" width="10" height="1" fill="#ffff00"/>
<path d="M901 171h1v1h-1zM902 171h1v1h-1zM903 171h1v1h-1zM903 172h1v1h-1zM902 173h1v1h-1zM901 174h1v1h-1zM902 174h1v1h-1zM903 175h1v1h-1zM903 176h1v1h-1zM901 177h1v1h-1zM902 177h1v1h-1zM903 177h1v1h-1zM905 177h1v1h-1zM907 171h1v1h-1zM908 171h1v1h-1zM909 171h1v1h-1zM909 172h1v1h-1zM909 173h1v1h-1zM907 174h1v1h-1zM908 174h1v1h-1zM909 174h1v1h-1zM907 175h1v1h-1zM907 176h1v1h-1zM907 177h1v1h-1zM908 177h1v1h-1zM909 177h1v1h-1z" fill="#ffff00"/>
<rect x="810" y="193" width="34" height="1" fill="#ffff00"/>
<path d="M810.69 185L816.31 194H817.31L811.69 185Z" fill="#ffff00"/>
<path d="M826.28 175L815.72 194H816.72L827.28 175Z" fill="#ffff00"/>
<rect x="811" y="185" width="11" height="1" fill="#ffff00"/>
<path d="M811 176h1v1h-1zM812 176h1v1h-1zM813 176h1v1h-1zM813 177h1v1h-1zM812 178h1v1h-1zM811 179h1v1h-1zM812 179h1v1h-1zM813 180h1v1h-1zM813 181h1v1h-1zM811 182h1v1h-1zM812 182h1v1h-1zM813 182h1v1h-1zM815 182h1v1h-1zM817 176h1v1h-1zM818 176h1v1h-1zM819 176h1v1h-1zM819 177h1v1h-1zM819 178h1v1h-1zM817 179h1v1h-1zM818 179h1v1h-1zM819 179h1v1h-1zM817 180h1v1h-1zM817 181h1v1h-1zM817 182h1v1h-1zM818 182h1v1h-1zM819 182h1v1h-1z" fill="#ffff00"/>
<rect x="837" y="172" width="1" height="28" fill="#ffff00"/>
<path d="M828 180h1v1h-1zM828 179h1v1h-1zM828 178h1v1h-1zM829 180h1v1h-1zM830 180h1v1h-1zM831 180h1v1h-1zM831 179h1v1h-1zM831 178h1v1h-1zM832 180h1v1h-1zM832 178h1v1h-1zM833 180h1v1h-1zM833 178h1v1h-1zM834 180h1v1h-1zM834 179h1v1h-1zM834 178h1v1h-1zM834 176h1v1h-1zM828 174h1v1h-1zM828 173h1v1h-1zM828 172h1v1h-1zM829 174h1v1h-1zM830 174h1v1h-1zM831 174h1v1h-1zM831 173h1v1h-1zM831 172h1v1h-1zM832 172h1v1h-1zM833 172h1v1h-1zM834 174h1v1h-1zM834 173h1v1h-1zM834 172h1v1h-1z" fill="#ffff00"/>
<rect x="838" y="183" width="1" height="3" fill="#ffff00"/>
<rect x="838" y="194" width="1" height="3" fill="#ffff00"/>
<path d="M121.5 382.5A8 8 0 0 1 129.5 374.5H588.5A8 8 0 0 1 596.5 382.5" stroke="#00ff00" fill="none" />
<path d="M121.5 637A9.5 9.5 0 0 0 131 646.5H588.5A8 8 0 0 0 596.5 638.5" stroke="#00ff00" fill="none" />
<rect x="121" y="382" width="1" height="34" fill="#00ff00"/>
<rect x="121" y="435" width="1" height="150" fill="#00ff00"/>
<rect x="121" y="605" width="1" height="33" fill="#00ff00"/>
<rect x="596" y="382" width="1" height="34" fill="#00ff00"/>
<rect x="596" y="435" width="1" height="150" fill="#00ff00"/>
<rect x="596" y="605" width="1" height="34" fill="#00ff00"/>
<rect x="206" y="374" width="1" height="273" fill="#00ff00"/>
<rect x="512" y="374" width="1" height="273" fill="#00ff00"/>
<rect x="121" y="408" width="35" height="1" fill="#00ff00"/>
<rect x="563" y="408" width="34" height="1" fill="#00ff00"/>
<rect x="121" y="415" width="35" height="1" fill="#00ff00"/>
<rect x="563" y="415" width="34" height="1" fill="#00ff00"/>
<rect x="121" y="435" width="35" height="1" fill="#00ff00"/>
<rect x="563" y="435" width="34" height="1" fill="#00ff00"/>
<rect x="121" y="442" width="35" height="1" fill="#00ff00"/>
<rect x="563" y="442" width="34" height="1" fill="#00ff00"/>
<path d="M155.5 408.5A17 17 0 0 1 155.5 442.5" stroke="#00ff00" fill="none" />
<path d="M155.5 415.5A10.0 10.0 0 0 1 155.5 435.5" stroke="#00ff00" fill="none" />
<path d="M563.5 408.5A17 17 0 0 0 563.5 442.5" stroke="#00ff00" fill="none" />
<path d="M563.5 415.5A10.0 10.0 0 0 0 563.5 435.5" stroke="#00ff00" fill="none" />
<rect x="138" y="425" width="15" height="1" fill="#ff0000"/>
<rect x="154" y="425" width="3" height="1" fill="#ff0000"/>
<rect x="158" y="425" width="15" height="1" fill="#ff0000"/>
<rect x="155" y="407" width="1" height="15" fill="#ff0000"/>
<rect x="155" y="424" width="1" height="3" fill="#ff0000"/>
<rect x="155" y="429" width="1" height="14" fill="#ff0000"/>
<rect x="545" y="425" width="17" height="1" fill="#ff0000"/>
<rect x="562" y="425" width="3" height="1" fill="#ff0000"/>
<rect x="566" y="425" width="14" height="1" fill="#ff0000"/>
<rect x="563" y="407" width="1" height="15" fill="#ff0000"/>
<rect x="563" y="424" width="1" height="3" fill="#ff0000"/>
<rect x="563" y="429" width="1" height="14" fill="#ff0000"/>
<rect x="121" y="578" width="35" height="1" fill="#00ff00"/>
<rect x="563" y="578" width="34" height="1" fill="#00ff00"/>
<rect x="121" y="584" width="35" height="1" fill="#00ff00"/>
<rect x="563" y="584" width="34" height="1" fill="#00ff00"/>
<rect x="121" y="605" width="35" height="1" fill="#00ff00"/>
<rect x="563" y="605" width="34" height="1" fill="#00ff00"/>
<rect x="121" y="612" width="35" height="1" fill="#00ff00"/>
<rect x="563" y="612" width="34" height="1" fill="#00ff00"/>
<path d="M155.5 578.5A17 17 0 0 1 155.5 612.5" stroke="#00ff00" fill="none" />
<path d="M155.5 584.5A10.5 10.5 0 0 1 155.5 605.5" stroke="#00ff00" fill="none" />
<path d="M563.5 578.5A17 17 0 0 0 563.5 612.5" stroke="#00ff00" fill="none" />
<path d="M563.5 584.5A10.5 10.5 0 0 0 563.5 605.5" stroke="#00ff00" fill="none" />
<rect x="138" y="595" width="15" height="1" fill="#ff0000"/>
<rect x="154" y="595" width="3" height="1" fill="#ff0000"/>
<rect x="158" y="595" width="15" height="1" fill="#ff0000"/>
<rect x="155" y="577" width="1" height="15" fill="#ff0000"/>
<rect x="155" y="594" width="1" height="3" fill="#ff0000"/>
<rect x="155" y="599" width="1" height="14" fill="#ff0000"/>
<rect x="545" y="595" width="17" height="1" fill="#ff0000"/>
<rect x="562" y="595" width="3" height="1" fill="#ff0000"/>
<rect x="566" y="595" width="14" height="1" fill="#ff0000"/>
<rect x="563" y="577" width="1" height="15" fill="#ff0000"/>
<rect x="563" y="594" width="1" height="3" fill="#ff0000"/>
<rect x="563" y="599" width="1" height="14" fill="#ff0000"/>
<rect x="121" y="343" width="1" height="40" fill="#ffff00"/>
<rect x="596" y="343" width="1" height="40" fill="#ffff00"/>
<rect x="121" y="343" width="476" height="1" fill="#ffff00"/>
<rect x="123" y="342" width="3" height="1" fill="#ffff00"/>
<rect x="592" y="342" width="3" height="1" fill="#ffff00"/>
<path d="M355 334h1v1h-1zM356 334h1v1h-1zM357 334h1v1h-1zM355 335h1v1h-1zM355 336h1v1h-1zM355 337h1v1h-1zM356 337h1v1h-1zM357 337h1v1h-1zM357 338h1v1h-1zM357 339h1v1h-1zM355 340h1v1h-1zM356 340h1v1h-1zM357 340h1v1h-1zM359 334h1v1h-1zM360 334h1v1h-1zM361 334h1v1h-1zM359 335h1v1h-1zM361 335h1v1h-1zM359 336h1v1h-1zM361 336h1v1h-1zM359 337h1v1h-1zM360 337h1v1h-1zM361 337h1v1h-1zM359 338h1v1h-1zM361 338h1v1h-1zM359 339h1v1h-1zM361 339h1v1h-1zM359 340h1v1h-1zM360 340h1v1h-1zM361 340h1v1h-1zM363 334h1v1h-1zM364 334h1v1h-1zM365 334h1v1h-1zM363 335h1v1h-1zM365 335h1v1h-1zM363 336h1v1h-1zM365 336h1v1h-1zM363 337h1v1h-1zM365 337h1v1h-1zM363 338h1v1h-1zM365 338h1v1h-1zM363 339h1v1h-1zM365 339h1v1h-1zM363 340h1v1h-1zM364 340h1v1h-1zM365 340h1v1h-1z" fill="#ffff00"/>
<rect x="206" y="357" width="1" height="18" fill="#ffff00"/>
<rect x="512" y="357" width="1" height="18" fill="#ffff00"/>
<rect x="206" y="357" width="307" height="1" fill="#ffff00"/>
<rect x="208" y="356" width="3" height="1" fill="#ffff00"/>
<rect x="508" y="356" width="3" height="1" fill="#ffff00"/>
<path d="M355 348h1v1h-1zM356 348h1v1h-1zM357 348h1v1h-1zM357 349h1v1h-1zM356 350h1v1h-1zM355 351h1v1h-1zM356 351h1v1h-1zM357 352h1v1h-1zM357 353h1v1h-1zM355 354h1v1h-1zM356 354h1v1h-1zM357 354h1v1h-1zM359 348h1v1h-1zM360 348h1v1h-1zM361 348h1v1h-1zM359 349h1v1h-1zM361 349h1v1h-1zM359 350h1v1h-1zM361 350h1v1h-1zM359 351h1v1h-1zM360 351h1v1h-1zM361 351h1v1h-1zM359 352h1v1h-1zM361 352h1v1h-1zM359 353h1v1h-1zM361 353h1v1h-1zM359 354h1v1h-1zM360 354h1v1h-1zM361 354h1v1h-1zM363 348h1v1h-1zM364 348h1v1h-1zM365 348h1v1h-1zM363 349h1v1h-1zM365 349h1v1h-1zM363 350h1v1h-1zM365 350h1v1h-1zM363 351h1v1h-1zM365 351h1v1h-1zM363 352h1v1h-1zM365 352h1v1h-1zM363 353h1v1h-1zM365 353h1v1h-1zM363 354h1v1h-1zM364 354h1v1h-1zM365 354h1v1h-1z" fill="#ffff00"/>
<line x1="110" y1="510.5" x2="612" y2="510.5" stroke="#ff0000" stroke-dasharray="26.4 2 3 1.9" stroke-dashoffset="11.2"/>
<circle cx="359.1" cy="509.9" r="29.3" stroke="#00ff00" fill="none"/>
<circle cx="359.3" cy="510.3" r="16.9" stroke="#00ff00" fill="none"/>
<rect x="359" y="480" width="1" height="27" fill="#ff0000"/>
<rect x="359" y="509" width="1" height="3" fill="#ff0000"/>
<rect x="359" y="514" width="1" height="30" fill="#ff0000"/>
<circle cx="495.1" cy="440.9" r="14.5" stroke="#00ff00" fill="none"/>
<circle cx="495.4" cy="441.3" r="7.9" stroke="#00ff00" fill="none"/>
<rect x="482" y="441" width="5" height="1" fill="#ff0000"/>
<rect x="488" y="441" width="15" height="1" fill="#ff0000"/>
<rect x="504" y="441" width="6" height="1" fill="#ff0000"/>
<rect x="495" y="425" width="1" height="14" fill="#ff0000"/>
<rect x="495" y="440" width="1" height="3" fill="#ff0000"/>
<rect x="495" y="444" width="1" height="13" fill="#ff0000"/>
<circle cx="495.4" cy="468.3" r="10.5" stroke="#00ff00" fill="none"/>
<circle cx="495.4" cy="468.3" r="4.8" stroke="#00ff00" fill="none"/>
<rect x="485" y="468" width="20" height="1" fill="#ff0000"/>
<rect x="495" y="456" width="1" height="10" fill="#ff0000"/>
<rect x="495" y="467" width="1" height="3" fill="#ff0000"/>
<rect x="495" y="471" width="1" height="9" fill="#ff0000"/>
<circle cx="495.4" cy="552.3" r="10.5" stroke="#00ff00" fill="none"/>
<circle cx="495.4" cy="552.3" r="4.8" stroke="#00ff00" fill="none"/>
<rect x="485" y="552" width="20" height="1" fill="#ff0000"/>
<rect x="495" y="540" width="1" height="10" fill="#ff0000"/>
<rect x="495" y="551" width="1" height="3" fill="#ff0000"/>
<rect x="495" y="555" width="1" height="9" fill="#ff0000"/>
<rect x="359" y="414" width="1" height="66" fill="#ffff00"/>
<rect x="495" y="414" width="1" height="13" fill="#ffff00"/>
<rect x="359" y="414" width="137" height="1" fill="#ffff00"/>
<rect x="361" y="413" width="3" height="1" fill="#ffff00"/>
<rect x="491" y="413" width="3" height="1" fill="#ffff00"/>
<path d="M417 405h1v1h-1zM416 406h1v1h-1zM417 406h1v1h-1zM417 407h1v1h-1zM417 408h1v1h-1zM417 409h1v1h-1zM417 410h1v1h-1zM417 411h1v1h-1zM419 405h1v1h-1zM420 405h1v1h-1zM421 405h1v1h-1zM419 406h1v1h-1zM421 406h1v1h-1zM419 407h1v1h-1zM421 407h1v1h-1zM419 408h1v1h-1zM420 408h1v1h-1zM421 408h1v1h-1zM419 409h1v1h-1zM421 409h1v1h-1zM419 410h1v1h-1zM421 410h1v1h-1zM419 411h1v1h-1zM420 411h1v1h-1zM421 411h1v1h-1zM423 405h1v1h-1zM424 405h1v1h-1zM425 405h1v1h-1zM423 406h1v1h-1zM425 406h1v1h-1zM423 407h1v1h-1zM425 407h1v1h-1zM423 408h1v1h-1zM425 408h1v1h-1zM423 409h1v1h-1zM425 409h1v1h-1zM423 410h1v1h-1zM425 410h1v1h-1zM423 411h1v1h-1zM424 411h1v1h-1zM425 411h1v1h-1zM428 407h1v1h-1zM427 408h1v1h-1zM428 408h1v1h-1zM429 408h1v1h-1zM428 409h1v1h-1zM427 411h1v1h-1zM428 411h1v1h-1zM429 411h1v1h-1zM431 405h1v1h-1zM432 405h1v1h-1zM433 405h1v1h-1zM431 406h1v1h-1zM433 406h1v1h-1zM431 407h1v1h-1zM433 407h1v1h-1zM431 408h1v1h-1zM433 408h1v1h-1zM431 409h1v1h-1zM433 409h1v1h-1zM431 410h1v1h-1zM433 410h1v1h-1zM431 411h1v1h-1zM432 411h1v1h-1zM433 411h1v1h-1zM435 411h1v1h-1zM438 405h1v1h-1zM437 406h1v1h-1zM438 406h1v1h-1zM438 407h1v1h-1zM438 408h1v1h-1zM438 409h1v1h-1zM438 410h1v1h-1zM438 411h1v1h-1z" fill="#ffff00"/>
<rect x="473" y="441" width="1" height="70" fill="#ffff00"/>
<rect x="473" y="441" width="10" height="1" fill="#ffff00"/>
<rect x="473" y="510" width="56" height="1" fill="#ffff00"/>
<rect x="474" y="443" width="1" height="3" fill="#ffff00"/>
<rect x="474" y="505" width="1" height="3" fill="#ffff00"/>
<path d="M464 484h1v1h-1zM464 483h1v1h-1zM464 482h1v1h-1zM465 484h1v1h-1zM466 484h1v1h-1zM467 484h1v1h-1zM467 483h1v1h-1zM467 482h1v1h-1zM468 484h1v1h-1zM468 482h1v1h-1zM469 484h1v1h-1zM469 482h1v1h-1zM470 484h1v1h-1zM470 483h1v1h-1zM470 482h1v1h-1zM464 479h1v1h-1zM465 480h1v1h-1zM465 479h1v1h-1zM466 479h1v1h-1zM467 479h1v1h-1zM468 479h1v1h-1zM469 479h1v1h-1zM470 479h1v1h-1zM466 476h1v1h-1zM467 477h1v1h-1zM467 476h1v1h-1zM467 475h1v1h-1zM468 476h1v1h-1zM470 477h1v1h-1zM470 476h1v1h-1zM470 475h1v1h-1zM464 473h1v1h-1zM464 472h1v1h-1zM464 471h1v1h-1zM465 473h1v1h-1zM465 471h1v1h-1zM466 473h1v1h-1zM466 471h1v1h-1zM467 473h1v1h-1zM467 471h1v1h-1zM468 473h1v1h-1zM468 471h1v1h-1zM469 473h1v1h-1zM469 471h1v1h-1zM470 473h1v1h-1zM470 472h1v1h-1zM470 471h1v1h-1zM470 469h1v1h-1zM464 466h1v1h-1zM465 467h1v1h-1zM465 466h1v1h-1zM466 466h1v1h-1zM467 466h1v1h-1zM468 466h1v1h-1zM469 466h1v1h-1zM470 466h1v1h-1z" fill="#ffff00"/>
<rect x="527" y="468" width="1" height="85" fill="#ffff00"/>
<rect x="506" y="468" width="23" height="1" fill="#ffff00"/>
<rect x="506" y="552" width="23" height="1" fill="#ffff00"/>
<rect x="528" y="470" width="1" height="3" fill="#ffff00"/>
<rect x="528" y="547" width="1" height="3" fill="#ffff00"/>
<path d="M518 519h1v1h-1zM518 518h1v1h-1zM518 517h1v1h-1zM519 519h1v1h-1zM519 517h1v1h-1zM520 519h1v1h-1zM520 517h1v1h-1zM521 519h1v1h-1zM521 518h1v1h-1zM521 517h1v1h-1zM522 517h1v1h-1zM523 517h1v1h-1zM524 519h1v1h-1zM524 518h1v1h-1zM524 517h1v1h-1zM518 515h1v1h-1zM518 514h1v1h-1zM518 513h1v1h-1zM519 513h1v1h-1zM520 514h1v1h-1zM521 515h1v1h-1zM521 514h1v1h-1zM522 513h1v1h-1zM523 513h1v1h-1zM524 515h1v1h-1zM524 514h1v1h-1zM524 513h1v1h-1zM520 510h1v1h-1zM521 511h1v1h-1zM521 510h1v1h-1zM521 509h1v1h-1zM522 510h1v1h-1zM524 511h1v1h-1zM524 510h1v1h-1zM524 509h1v1h-1zM518 507h1v1h-1zM518 506h1v1h-1zM518 505h1v1h-1zM519 507h1v1h-1zM519 505h1v1h-1zM520 507h1v1h-1zM520 505h1v1h-1zM521 507h1v1h-1zM521 505h1v1h-1zM522 507h1v1h-1zM522 505h1v1h-1zM523 507h1v1h-1zM523 505h1v1h-1zM524 507h1v1h-1zM524 506h1v1h-1zM524 505h1v1h-1zM524 503h1v1h-1zM518 500h1v1h-1zM519 501h1v1h-1zM519 500h1v1h-1zM520 500h1v1h-1zM521 500h1v1h-1zM522 500h1v1h-1zM523 500h1v1h-1zM524 500h1v1h-1z" fill="#ffff00"/>
<rect x="563" y="396" width="1" height="13" fill="#ffff00"/>
<rect x="563" y="396" width="34" height="1" fill="#ffff00"/>
<rect x="565" y="395" width="3" height="1" fill="#ffff00"/>
<rect x="592" y="395" width="3" height="1" fill="#ffff00"/>
<path d="M577 387h1v1h-1zM579 387h1v1h-1zM577 388h1v1h-1zM579 388h1v1h-1zM577 389h1v1h-1zM579 389h1v1h-1zM577 390h1v1h-1zM578 390h1v1h-1zM579 390h1v1h-1zM579 391h1v1h-1zM579 392h1v1h-1zM579 393h1v1h-1zM581 387h1v1h-1zM582 387h1v1h-1zM583 387h1v1h-1zM581 388h1v1h-1zM583 388h1v1h-1zM581 389h1v1h-1zM583 389h1v1h-1zM581 390h1v1h-1zM583 390h1v1h-1zM581 391h1v1h-1zM583 391h1v1h-1zM581 392h1v1h-1zM583 392h1v1h-1zM581 393h1v1h-1zM582 393h1v1h-1zM583 393h1v1h-1z" fill="#ffff00"/>
<rect x="580" y="425" width="43" height="1" fill="#ffff00"/>
<rect x="580" y="595" width="43" height="1" fill="#ffff00"/>
<rect x="622" y="425" width="1" height="171" fill="#ffff00"/>
<rect x="623" y="427" width="1" height="3" fill="#ffff00"/>
<rect x="623" y="591" width="1" height="3" fill="#ffff00"/>
<path d="M614 513h1v1h-1zM614 512h1v1h-1zM614 511h1v1h-1zM615 511h1v1h-1zM616 511h1v1h-1zM617 513h1v1h-1zM617 512h1v1h-1zM617 511h1v1h-1zM618 513h1v1h-1zM619 513h1v1h-1zM620 513h1v1h-1zM620 512h1v1h-1zM620 511h1v1h-1zM614 509h1v1h-1zM614 508h1v1h-1zM614 507h1v1h-1zM615 509h1v1h-1zM615 507h1v1h-1zM616 509h1v1h-1zM616 507h1v1h-1zM617 509h1v1h-1zM617 507h1v1h-1zM618 509h1v1h-1zM618 507h1v1h-1zM619 509h1v1h-1zM619 507h1v1h-1zM620 509h1v1h-1zM620 508h1v1h-1zM620 507h1v1h-1zM614 505h1v1h-1zM614 504h1v1h-1zM614 503h1v1h-1zM615 505h1v1h-1zM615 503h1v1h-1zM616 505h1v1h-1zM616 503h1v1h-1zM617 505h1v1h-1zM617 503h1v1h-1zM618 505h1v1h-1zM618 503h1v1h-1zM619 505h1v1h-1zM619 503h1v1h-1zM620 505h1v1h-1zM620 504h1v1h-1zM620 503h1v1h-1z" fill="#ffff00"/>
<rect x="588" y="374" width="47" height="1" fill="#ffff00"/>
<rect x="588" y="646" width="47" height="1" fill="#ffff00"/>
<rect x="634" y="374" width="1" height="273" fill="#ffff00"/>
<rect x="635" y="376" width="1" height="3" fill="#ffff00"/>
<rect x="635" y="642" width="1" height="3" fill="#ffff00"/>
<path d="M627 513h1v1h-1zM627 512h1v1h-1zM627 511h1v1h-1zM628 511h1v1h-1zM629 512h1v1h-1zM630 513h1v1h-1zM630 512h1v1h-1zM631 511h1v1h-1zM632 511h1v1h-1zM633 513h1v1h-1zM633 512h1v1h-1zM633 511h1v1h-1zM627 509h1v1h-1zM627 508h1v1h-1zM627 507h1v1h-1zM628 507h1v1h-1zM629 507h1v1h-1zM630 509h1v1h-1zM630 508h1v1h-1zM630 507h1v1h-1zM631 509h1v1h-1zM632 509h1v1h-1zM633 509h1v1h-1zM633 508h1v1h-1zM633 507h1v1h-1zM627 505h1v1h-1zM627 504h1v1h-1zM627 503h1v1h-1zM628 505h1v1h-1zM628 503h1v1h-1zM629 505h1v1h-1zM629 503h1v1h-1zM630 505h1v1h-1zM630 503h1v1h-1zM631 505h1v1h-1zM631 503h1v1h-1zM632 505h1v1h-1zM632 503h1v1h-1zM633 505h1v1h-1zM633 504h1v1h-1zM633 503h1v1h-1z" fill="#ffff00"/>
<path d="M537 405.63L564 425.37V426.37L537 406.63Z" fill="#ffff00"/>
<path d="M541 444.43L564 424.57V425.57L541 445.43Z" fill="#ffff00"/>
<path transform="translate(537.5 406.5) rotate(36) scale(1.1)" d="M2 -8h1v1h-1zM3 -8h1v1h-1zM4 -8h1v1h-1zM2 -7h1v1h-1zM4 -7h1v1h-1zM2 -6h1v1h-1zM4 -6h1v1h-1zM2 -5h1v1h-1zM3 -5h1v1h-1zM4 -5h1v1h-1zM2 -4h1v1h-1zM3 -4h1v1h-1zM2 -3h1v1h-1zM4 -3h1v1h-1zM2 -2h1v1h-1zM4 -2h1v1h-1zM6 -8h1v1h-1zM7 -8h1v1h-1zM8 -8h1v1h-1zM8 -7h1v1h-1zM8 -6h1v1h-1zM6 -5h1v1h-1zM7 -5h1v1h-1zM8 -5h1v1h-1zM6 -4h1v1h-1zM6 -3h1v1h-1zM6 -2h1v1h-1zM7 -2h1v1h-1zM8 -2h1v1h-1zM10 -8h1v1h-1zM11 -8h1v1h-1zM12 -8h1v1h-1zM12 -7h1v1h-1zM11 -6h1v1h-1zM10 -5h1v1h-1zM11 -5h1v1h-1zM12 -4h1v1h-1zM12 -3h1v1h-1zM10 -2h1v1h-1zM11 -2h1v1h-1zM12 -2h1v1h-1z" fill="#ffff00" shape-rendering="auto"/>
<path transform="translate(541.5 444.5) rotate(-41) scale(1.1)" d="M1 -8h1v1h-1zM2 -8h1v1h-1zM3 -8h1v1h-1zM1 -7h1v1h-1zM3 -7h1v1h-1zM1 -6h1v1h-1zM3 -6h1v1h-1zM1 -5h1v1h-1zM2 -5h1v1h-1zM3 -5h1v1h-1zM1 -4h1v1h-1zM2 -4h1v1h-1zM1 -3h1v1h-1zM3 -3h1v1h-1zM1 -2h1v1h-1zM3 -2h1v1h-1zM6 -8h1v1h-1zM5 -7h1v1h-1zM6 -7h1v1h-1zM6 -6h1v1h-1zM6 -5h1v1h-1zM6 -4h1v1h-1zM6 -3h1v1h-1zM6 -2h1v1h-1zM8 -8h1v1h-1zM9 -8h1v1h-1zM10 -8h1v1h-1zM10 -7h1v1h-1zM10 -6h1v1h-1zM8 -5h1v1h-1zM9 -5h1v1h-1zM10 -5h1v1h-1zM8 -4h1v1h-1zM8 -3h1v1h-1zM8 -2h1v1h-1zM9 -2h1v1h-1zM10 -2h1v1h-1z" fill="#ffff00" shape-rendering="auto"/>
<rect x="104" y="472" width="1" height="2" fill="#ffff00"/>
<rect x="106" y="472" width="1" height="2" fill="#ffff00"/>
<rect x="103" y="474" width="1" height="3" fill="#ffff00"/>
<rect x="105" y="474" width="3" height="3" fill="#ffff00"/>
<rect x="103" y="477" width="2" height="1" fill="#ffff00"/>
<rect x="102" y="478" width="1" height="2" fill="#ffff00"/>
<rect x="106" y="477" width="1" height="3" fill="#ffff00"/>
<rect x="106" y="480" width="5" height="1" fill="#ffff00"/>
<rect x="327" y="503" width="1" height="2" fill="#ffff00"/>
<rect x="326" y="505" width="1" height="3" fill="#ffff00"/>
<rect x="328" y="505" width="1" height="3" fill="#ffff00"/>
<rect x="326" y="507" width="3" height="1" fill="#ffff00"/>
<rect x="325" y="508" width="1" height="2" fill="#ffff00"/>
<rect x="329" y="508" width="1" height="2" fill="#ffff00"/>
<rect x="330" y="507" width="1" height="4" fill="#ffff00"/>
<rect x="330" y="510" width="6" height="1" fill="#ffff00"/>
<rect x="326" y="480" width="5" height="1" fill="#ffff00"/>
<rect x="330" y="480" width="1" height="5" fill="#ffff00"/>
<rect x="334" y="476" width="1" height="2" fill="#ffff00"/>
<rect x="333" y="478" width="1" height="3" fill="#ffff00"/>
<rect x="335" y="478" width="1" height="3" fill="#ffff00"/>
<rect x="333" y="480" width="3" height="1" fill="#ffff00"/>
<rect x="332" y="481" width="1" height="2" fill="#ffff00"/>
<rect x="336" y="481" width="1" height="2" fill="#ffff00"/>
<rect x="605" y="501" width="1" height="9" fill="#ffff00"/>
<rect x="606" y="501" width="5" height="1" fill="#ffff00"/>
<rect x="607" y="503" width="1" height="2" fill="#ffff00"/>
<rect x="609" y="503" width="1" height="2" fill="#ffff00"/>
<rect x="606" y="505" width="5" height="1" fill="#ffff00"/>
<rect x="607" y="506" width="3" height="2" fill="#ffff00"/>
<rect x="606" y="508" width="1" height="2" fill="#ffff00"/>
<rect x="610" y="508" width="1" height="2" fill="#ffff00"/>
<rect x="490" y="361" width="1" height="7" fill="#ffff00"/>
<rect x="491" y="361" width="2" height="1" fill="#ffff00"/>
<rect x="493" y="362" width="1" height="2" fill="#ffff00"/>
<rect x="491" y="364" width="2" height="1" fill="#ffff00"/>
<rect x="493" y="365" width="1" height="2" fill="#ffff00"/>
<rect x="491" y="367" width="2" height="1" fill="#ffff00"/>
<rect x="496" y="364" width="8" height="1" fill="#ffff00"/>
<rect x="496" y="364" width="1" height="5" fill="#ffff00"/>
<rect x="490" y="652" width="1" height="7" fill="#ffff00"/>
<rect x="491" y="652" width="2" height="1" fill="#ffff00"/>
<rect x="493" y="653" width="1" height="2" fill="#ffff00"/>
<rect x="491" y="655" width="2" height="1" fill="#ffff00"/>
<rect x="493" y="656" width="1" height="2" fill="#ffff00"/>
<rect x="491" y="658" width="2" height="1" fill="#ffff00"/>
<rect x="495" y="655" width="1" height="5" fill="#ffff00"/>
<rect x="495" y="659" width="9" height="1" fill="#ffff00"/>
<rect x="502" y="306" width="1" height="64" fill="#ffffff"/>
<rect x="509" y="376" width="64" height="1" fill="#ffffff"/>
<rect x="495.5" y="369.5" width="14" height="13" stroke="#ffffff" fill="none"/>
<rect x="502" y="369" width="1" height="14" fill="#ffffff"/>
<rect x="495" y="376" width="15" height="1" fill="#ffffff"/>
<path d="M502.10 291L498.90 307H499.90L503.10 291Z" fill="#777"/>
<path d="M502.90 291L506.10 307H507.10L503.90 291Z" fill="#777"/>
<path d="M502.18 289L495.82 307H496.82L503.18 289Z" fill="#ffffff"/>
<path d="M502.82 289L509.18 307H510.18L503.82 289Z" fill="#ffffff"/>
<rect x="496" y="306" width="14" height="1" fill="#ffffff"/>
<rect x="502" y="289" width="1" height="18" fill="#ffffff"/>
<path d="M572 372.90L588 376.10V377.10L572 373.90Z" fill="#777"/>
<path d="M572 379.10L588 375.90V376.90L572 380.10Z" fill="#777"/>
<path d="M572 368.79L590 376.21V377.21L572 369.79Z" fill="#ffffff"/>
<path d="M572 383.21L590 375.79V376.79L572 384.21Z" fill="#ffffff"/>
<rect x="572" y="369" width="1" height="15" fill="#ffffff"/>
<rect x="572" y="376" width="18" height="1" fill="#ffffff"/>
<path d="M603.65 368L616.35 386H617.35L604.65 368Z" fill="#ffffff"/>
<path d="M615.32 368L603.68 386H604.68L616.32 368Z" fill="#ffffff"/>
<path d="M498.72 259L504.28 269H505.28L499.72 259Z" fill="#ffffff"/>
<path d="M510.33 259L503.67 269H504.67L511.33 259Z" fill="#ffffff"/>
<rect x="504" y="268" width="1" height="11" fill="#ffffff"/>
<path d="M811 400h1v9h-1zM812 400h1v8h-1zM813 400h1v8h-1zM814 400h1v8h-1zM815 400h1v10h-1zM816 402h1v8h-1zM817 400h1v8h-1zM818 400h1v8h-1zM819 401h1v8h-1zM820 400h1v10h-1zM821 401h1v8h-1zM822 401h1v9h-1zM823 400h1v8h-1zM824 401h1v7h-1zM825 400h1v9h-1zM826 401h1v7h-1zM827 401h1v8h-1zM828 401h1v9h-1zM829 401h1v8h-1zM830 400h1v9h-1zM831 401h1v8h-1zM832 400h1v10h-1zM833 400h1v9h-1zM834 400h1v8h-1zM835 401h1v7h-1zM836 401h1v9h-1zM837 402h1v8h-1z" fill="#ffffff"/>
<path d="M811 402h1v2h-1zM812 402h1v1h-1zM818 403h1v1h-1zM820 404h1v1h-1zM821 405h1v2h-1zM827 405h1v1h-1zM828 404h1v1h-1zM829 405h1v1h-1zM832 406h1v1h-1zM836 403h1v1h-1zM837 406h1v1h-1z" fill="#000"/>
<path d="M738 418h1v1h-1zM737 419h1v1h-1zM738 419h1v1h-1zM738 420h1v1h-1zM738 421h1v1h-1zM738 422h1v1h-1zM738 423h1v1h-1zM738 424h1v1h-1zM740 424h1v1h-1z" fill="#ffffff"/>
<path d="M742 417h1v6h-1zM743 417h1v7h-1zM744 417h1v7h-1zM745 417h1v7h-1zM746 416h1v7h-1zM747 418h1v6h-1zM748 417h1v6h-1zM749 418h1v5h-1zM750 416h1v9h-1zM751 418h1v6h-1zM752 417h1v7h-1zM753 417h1v7h-1zM754 416h1v8h-1zM755 417h1v7h-1zM756 416h1v8h-1zM757 416h1v8h-1zM758 416h1v9h-1zM759 416h1v7h-1zM760 417h1v8h-1zM762 416h1v7h-1zM763 416h1v9h-1zM764 418h1v6h-1zM765 417h1v7h-1zM766 418h1v7h-1zM768 416h1v7h-1zM769 416h1v7h-1zM770 416h1v7h-1zM771 418h1v6h-1zM772 417h1v7h-1zM773 417h1v7h-1zM774 416h1v7h-1zM775 418h1v7h-1zM776 417h1v7h-1zM777 417h1v8h-1zM778 417h1v8h-1zM779 416h1v8h-1zM780 416h1v9h-1z" fill="#ffffff"/>
<path d="M742 419h1v1h-1zM751 418h1v2h-1zM752 422h1v1h-1zM753 418h1v1h-1zM755 418h1v2h-1zM758 421h1v2h-1zM763 419h1v1h-1zM764 421h1v1h-1zM768 419h1v1h-1zM769 422h1v1h-1zM770 419h1v1h-1zM776 419h1v1h-1zM778 419h1v1h-1z" fill="#000"/>
<rect x="782" y="423" width="1" height="2" fill="#ffffff"/>
<path d="M787 417h1v8h-1zM789 417h1v8h-1zM790 416h1v9h-1zM791 416h1v9h-1zM792 416h1v8h-1zM793 417h1v8h-1zM794 417h1v8h-1zM795 416h1v9h-1zM796 416h1v8h-1zM797 418h1v7h-1zM798 417h1v8h-1zM799 416h1v8h-1zM800 416h1v8h-1zM801 416h1v7h-1zM802 417h1v7h-1zM803 417h1v8h-1zM804 416h1v8h-1zM805 416h1v9h-1zM806 416h1v9h-1zM807 417h1v6h-1zM808 417h1v8h-1zM809 416h1v9h-1zM810 416h1v8h-1zM811 416h1v9h-1zM812 416h1v8h-1zM813 416h1v9h-1zM814 418h1v6h-1z" fill="#ffffff"/>
<path d="M787 420h1v2h-1zM791 418h1v1h-1zM794 419h1v1h-1zM795 419h1v2h-1zM796 422h1v1h-1zM797 419h1v1h-1zM798 420h1v1h-1zM800 418h1v1h-1zM807 420h1v1h-1zM807 419h1v2h-1zM808 420h1v1h-1zM811 420h1v2h-1z" fill="#000"/>
<rect x="816" y="423" width="1" height="2" fill="#ffffff"/>
<path d="M821 417h1v6h-1zM822 418h1v7h-1zM823 416h1v7h-1zM824 416h1v9h-1zM825 417h1v7h-1zM826 416h1v8h-1zM827 418h1v5h-1zM828 416h1v8h-1zM829 417h1v7h-1zM830 418h1v7h-1zM831 417h1v6h-1z" fill="#ffffff"/>
<path d="M821 421h1v2h-1zM824 419h1v1h-1zM826 421h1v1h-1zM827 422h1v1h-1zM827 421h1v2h-1zM828 419h1v1h-1zM829 420h1v2h-1zM830 419h1v1h-1zM831 418h1v2h-1z" fill="#000"/>
<rect x="833" y="423" width="1" height="2" fill="#ffffff"/>
<path d="M838 416h1v9h-1zM839 417h1v7h-1zM840 416h1v8h-1zM842 418h1v6h-1zM843 416h1v9h-1zM844 417h1v8h-1zM845 416h1v8h-1zM846 417h1v7h-1zM847 417h1v7h-1zM848 416h1v9h-1zM849 417h1v8h-1zM850 417h1v7h-1zM851 416h1v8h-1zM852 417h1v6h-1zM853 417h1v8h-1zM854 418h1v5h-1z" fill="#ffffff"/>
<path d="M845 421h1v1h-1zM847 420h1v1h-1zM847 420h1v2h-1zM854 418h1v1h-1zM854 421h1v2h-1z" fill="#000"/>
<rect x="855" y="423" width="1" height="2" fill="#ffffff"/>
<path d="M861 416h1v8h-1zM862 416h1v8h-1zM863 417h1v7h-1zM864 417h1v8h-1zM865 417h1v7h-1zM866 416h1v9h-1zM867 417h1v7h-1zM869 417h1v7h-1zM870 416h1v8h-1zM871 416h1v9h-1z" fill="#ffffff"/>
<path d="M864 419h1v1h-1zM864 421h1v2h-1zM866 420h1v1h-1zM870 420h1v1h-1zM871 419h1v1h-1z" fill="#000"/>
<rect x="872" y="423" width="1" height="2" fill="#ffffff"/>
<path d="M877 417h1v7h-1zM880 417h1v6h-1zM881 416h1v9h-1zM882 417h1v8h-1zM883 416h1v8h-1zM884 417h1v8h-1zM885 417h1v7h-1zM886 417h1v7h-1zM887 416h1v7h-1zM888 416h1v9h-1zM889 417h1v8h-1zM890 416h1v8h-1zM891 416h1v8h-1zM892 416h1v8h-1zM893 417h1v7h-1zM894 416h1v8h-1zM895 416h1v8h-1zM896 416h1v9h-1zM897 416h1v9h-1zM898 418h1v6h-1zM899 417h1v8h-1zM900 416h1v7h-1zM901 417h1v7h-1zM902 417h1v8h-1zM903 417h1v8h-1zM904 416h1v8h-1zM905 418h1v6h-1zM906 416h1v8h-1zM907 417h1v8h-1zM908 416h1v9h-1zM909 417h1v7h-1zM910 416h1v8h-1zM911 418h1v7h-1zM912 418h1v7h-1zM913 417h1v8h-1zM914 416h1v8h-1zM915 416h1v9h-1z" fill="#ffffff"/>
<path d="M880 421h1v2h-1zM881 419h1v1h-1zM882 419h1v2h-1zM884 420h1v1h-1zM885 422h1v1h-1zM885 420h1v2h-1zM887 421h1v1h-1zM893 422h1v1h-1zM895 418h1v1h-1zM896 421h1v1h-1zM898 421h1v1h-1zM899 418h1v1h-1zM901 421h1v1h-1zM904 418h1v1h-1zM910 420h1v1h-1zM915 421h1v1h-1z" fill="#000"/>
<path d="M737 427h1v9h-1zM738 429h1v7h-1zM739 428h1v7h-1zM740 427h1v9h-1zM741 428h1v8h-1zM742 428h1v8h-1z" fill="#ffffff"/>
<path d="M737 432h1v1h-1zM739 431h1v1h-1zM740 433h1v1h-1zM742 432h1v1h-1z" fill="#000"/>
<rect x="743" y="434" width="1" height="2" fill="#ffffff"/>
<path d="M748 428h1v7h-1zM749 429h1v5h-1zM750 428h1v6h-1zM751 429h1v6h-1zM752 428h1v8h-1zM753 427h1v8h-1zM754 427h1v9h-1zM755 427h1v8h-1zM756 427h1v8h-1zM757 428h1v7h-1zM758 428h1v7h-1zM759 428h1v8h-1zM760 428h1v8h-1zM761 428h1v7h-1zM762 427h1v8h-1zM763 427h1v9h-1zM764 427h1v9h-1zM765 427h1v8h-1zM766 427h1v7h-1zM767 429h1v7h-1zM768 429h1v7h-1zM769 428h1v6h-1zM770 427h1v9h-1zM771 428h1v8h-1zM772 428h1v7h-1zM773 428h1v7h-1zM775 428h1v8h-1zM776 427h1v8h-1zM777 427h1v8h-1zM778 427h1v9h-1zM779 427h1v9h-1zM780 427h1v9h-1zM781 427h1v9h-1zM782 427h1v9h-1zM783 428h1v6h-1zM784 428h1v8h-1zM785 428h1v8h-1zM786 428h1v7h-1zM787 428h1v7h-1zM788 427h1v8h-1zM789 428h1v7h-1zM790 428h1v8h-1zM791 427h1v8h-1zM792 429h1v6h-1zM793 428h1v6h-1zM794 427h1v9h-1zM795 427h1v9h-1zM796 429h1v7h-1zM797 428h1v6h-1zM799 427h1v8h-1zM800 428h1v7h-1zM801 429h1v6h-1zM802 427h1v9h-1zM803 427h1v9h-1zM804 428h1v8h-1zM805 428h1v6h-1zM806 428h1v6h-1zM807 428h1v8h-1zM808 427h1v8h-1zM809 428h1v8h-1zM810 429h1v6h-1zM811 427h1v9h-1zM812 428h1v7h-1zM813 429h1v6h-1zM816 427h1v7h-1zM817 429h1v7h-1zM819 429h1v7h-1zM821 427h1v9h-1zM822 429h1v7h-1zM823 428h1v8h-1zM825 427h1v8h-1zM826 427h1v8h-1z" fill="#ffffff"/>
<path d="M748 431h1v1h-1zM749 429h1v1h-1zM750 429h1v1h-1zM751 431h1v1h-1zM754 432h1v1h-1zM762 433h1v1h-1zM765 429h1v1h-1zM769 431h1v1h-1zM776 431h1v2h-1zM781 432h1v1h-1zM782 431h1v1h-1zM783 432h1v1h-1zM785 432h1v1h-1zM786 431h1v1h-1zM799 430h1v1h-1zM800 431h1v2h-1zM802 433h1v1h-1zM802 430h1v2h-1zM803 433h1v1h-1zM805 431h1v1h-1zM805 429h1v2h-1zM806 432h1v1h-1zM807 429h1v1h-1zM809 433h1v1h-1zM810 430h1v1h-1zM810 429h1v2h-1zM821 431h1v2h-1zM823 430h1v1h-1z" fill="#000"/>
<rect x="827" y="434" width="1" height="2" fill="#ffffff"/>
<path d="M834 428h1v8h-1zM835 429h1v5h-1zM836 428h1v8h-1zM837 427h1v7h-1zM838 429h1v6h-1zM839 427h1v9h-1zM840 429h1v6h-1zM841 427h1v8h-1zM842 427h1v9h-1zM843 429h1v7h-1z" fill="#ffffff"/>
<path d="M838 429h1v1h-1zM839 430h1v2h-1z" fill="#000"/>
<rect x="844" y="434" width="1" height="2" fill="#ffffff"/>
<path d="M849 428h1v8h-1zM850 428h1v7h-1zM851 427h1v8h-1zM852 427h1v8h-1zM853 428h1v6h-1zM854 428h1v6h-1zM855 427h1v7h-1zM856 429h1v7h-1zM857 429h1v5h-1zM858 428h1v8h-1zM859 427h1v8h-1zM860 427h1v8h-1zM862 428h1v8h-1zM863 427h1v8h-1zM864 428h1v6h-1zM865 429h1v7h-1zM866 428h1v7h-1zM867 428h1v8h-1zM869 429h1v7h-1z" fill="#ffffff"/>
<path d="M851 433h1v1h-1zM854 431h1v1h-1zM855 431h1v1h-1zM858 429h1v1h-1zM860 432h1v1h-1zM866 432h1v2h-1zM867 432h1v1h-1z" fill="#000"/>
<rect x="872" y="434" width="1" height="2" fill="#ffffff"/>
<path d="M878 427h1v9h-1zM879 427h1v7h-1zM880 427h1v8h-1zM881 429h1v6h-1zM882 427h1v8h-1zM883 429h1v6h-1zM884 427h1v9h-1zM885 429h1v6h-1zM886 429h1v7h-1zM887 427h1v9h-1zM888 429h1v7h-1zM889 428h1v7h-1zM890 428h1v7h-1zM891 428h1v7h-1zM892 428h1v7h-1zM893 429h1v7h-1zM894 428h1v8h-1zM895 427h1v7h-1zM898 428h1v7h-1zM899 427h1v8h-1zM900 429h1v7h-1zM901 427h1v7h-1zM902 427h1v7h-1zM903 427h1v8h-1zM904 429h1v7h-1zM905 427h1v8h-1zM907 428h1v6h-1zM908 428h1v7h-1zM909 428h1v8h-1zM910 428h1v8h-1zM911 427h1v9h-1zM912 428h1v7h-1zM913 427h1v8h-1zM914 428h1v7h-1zM915 428h1v6h-1zM916 427h1v8h-1z" fill="#ffffff"/>
<path d="M878 430h1v1h-1zM884 432h1v1h-1zM885 431h1v1h-1zM887 430h1v2h-1zM892 431h1v1h-1zM894 433h1v1h-1zM902 432h1v1h-1zM905 433h1v1h-1zM909 429h1v1h-1zM916 431h1v1h-1z" fill="#000"/>
<path d="M737 438h1v9h-1zM738 440h1v7h-1zM739 439h1v6h-1zM740 440h1v7h-1zM741 438h1v9h-1zM742 438h1v8h-1zM743 439h1v7h-1zM744 440h1v7h-1zM745 439h1v6h-1zM746 439h1v6h-1zM747 439h1v7h-1z" fill="#ffffff"/>
<path d="M739 443h1v2h-1zM740 443h1v1h-1zM743 440h1v1h-1zM747 443h1v2h-1z" fill="#000"/>
<rect x="749" y="445" width="1" height="2" fill="#ffffff"/>
<path d="M737 452h1v1h-1zM738 452h1v1h-1zM739 452h1v1h-1zM739 453h1v1h-1zM739 454h1v1h-1zM737 455h1v1h-1zM738 455h1v1h-1zM739 455h1v1h-1zM737 456h1v1h-1zM737 457h1v1h-1zM737 458h1v1h-1zM738 458h1v1h-1zM739 458h1v1h-1zM741 458h1v1h-1z" fill="#ffffff"/>
<path d="M744 450h1v9h-1zM745 450h1v9h-1zM747 450h1v8h-1zM748 450h1v9h-1zM749 451h1v8h-1zM750 452h1v7h-1zM751 451h1v6h-1zM752 451h1v8h-1zM753 451h1v7h-1zM754 452h1v6h-1zM755 452h1v6h-1zM757 451h1v6h-1zM758 451h1v6h-1zM759 450h1v8h-1zM760 450h1v8h-1zM761 452h1v7h-1zM762 451h1v6h-1zM763 450h1v8h-1zM764 450h1v8h-1zM765 450h1v7h-1zM766 452h1v5h-1zM767 451h1v6h-1zM768 450h1v8h-1zM769 452h1v7h-1zM770 451h1v8h-1zM771 450h1v9h-1zM772 451h1v7h-1zM773 452h1v7h-1zM774 451h1v8h-1zM775 451h1v7h-1zM776 452h1v6h-1zM777 451h1v6h-1z" fill="#ffffff"/>
<path d="M744 452h1v2h-1zM748 456h1v1h-1zM749 452h1v2h-1zM751 454h1v1h-1zM752 452h1v1h-1zM754 452h1v1h-1zM759 455h1v1h-1zM761 456h1v1h-1zM762 456h1v1h-1zM764 455h1v2h-1zM769 455h1v1h-1zM770 456h1v1h-1zM770 454h1v2h-1zM771 456h1v1h-1zM773 452h1v1h-1zM774 452h1v1h-1zM777 452h1v1h-1z" fill="#000"/>
<path d="M777 452h1v1h-1zM778 452h1v1h-1zM779 452h1v1h-1zM777 453h1v1h-1zM779 453h1v1h-1zM777 454h1v1h-1zM779 454h1v1h-1zM777 455h1v1h-1zM778 455h1v1h-1zM779 455h1v1h-1zM777 456h1v1h-1zM778 456h1v1h-1zM777 457h1v1h-1zM779 457h1v1h-1zM777 458h1v1h-1zM779 458h1v1h-1zM782 452h1v1h-1zM781 453h1v1h-1zM782 453h1v1h-1zM782 454h1v1h-1zM782 455h1v1h-1zM782 456h1v1h-1zM782 457h1v1h-1zM782 458h1v1h-1zM784 452h1v1h-1zM785 452h1v1h-1zM786 452h1v1h-1zM784 453h1v1h-1zM786 453h1v1h-1zM784 454h1v1h-1zM786 454h1v1h-1zM784 455h1v1h-1zM786 455h1v1h-1zM784 456h1v1h-1zM786 456h1v1h-1zM784 457h1v1h-1zM786 457h1v1h-1zM784 458h1v1h-1zM785 458h1v1h-1zM786 458h1v1h-1z" fill="#ffffff"/>
<rect x="789" y="457" width="1" height="2" fill="#ffffff"/>
<path d="M737 464h1v1h-1zM738 464h1v1h-1zM739 464h1v1h-1zM739 465h1v1h-1zM738 466h1v1h-1zM737 467h1v1h-1zM738 467h1v1h-1zM739 468h1v1h-1zM739 469h1v1h-1zM737 470h1v1h-1zM738 470h1v1h-1zM739 470h1v1h-1zM741 470h1v1h-1z" fill="#ffffff"/>
<path d="M744 463h1v8h-1zM745 462h1v9h-1zM746 464h1v7h-1zM747 462h1v8h-1zM748 463h1v6h-1zM749 463h1v7h-1zM750 463h1v8h-1zM751 463h1v8h-1zM752 462h1v7h-1zM753 463h1v8h-1zM755 463h1v7h-1zM756 462h1v8h-1zM757 462h1v8h-1zM758 462h1v9h-1zM759 463h1v8h-1zM760 464h1v7h-1zM761 464h1v6h-1zM762 463h1v7h-1zM763 462h1v8h-1zM764 462h1v8h-1zM765 462h1v7h-1z" fill="#ffffff"/>
<path d="M745 466h1v1h-1zM746 467h1v2h-1zM749 464h1v1h-1zM756 464h1v1h-1zM758 466h1v1h-1zM763 465h1v1h-1zM763 466h1v2h-1zM765 466h1v1h-1z" fill="#000"/>
<rect x="766" y="469" width="1" height="2" fill="#ffffff"/>
<path d="M737 475h1v1h-1zM739 475h1v1h-1zM737 476h1v1h-1zM739 476h1v1h-1zM737 477h1v1h-1zM739 477h1v1h-1zM737 478h1v1h-1zM738 478h1v1h-1zM739 478h1v1h-1zM739 479h1v1h-1zM739 480h1v1h-1zM739 481h1v1h-1zM741 481h1v1h-1z" fill="#ffffff"/>
<path d="M744 473h1v8h-1zM745 473h1v9h-1zM746 474h1v7h-1zM747 473h1v7h-1zM748 473h1v7h-1zM749 474h1v8h-1zM750 473h1v9h-1zM752 475h1v5h-1zM753 475h1v7h-1zM754 474h1v7h-1zM755 473h1v8h-1zM757 473h1v7h-1zM758 473h1v9h-1zM759 475h1v6h-1zM760 473h1v9h-1zM761 474h1v8h-1zM762 473h1v9h-1zM763 473h1v8h-1zM764 473h1v8h-1zM765 473h1v8h-1zM766 474h1v7h-1zM767 474h1v8h-1zM769 473h1v9h-1zM770 473h1v9h-1zM771 474h1v8h-1zM772 473h1v7h-1zM773 473h1v7h-1zM774 473h1v8h-1zM775 475h1v5h-1zM776 475h1v7h-1zM777 474h1v8h-1zM778 474h1v6h-1zM779 475h1v6h-1zM780 474h1v7h-1zM781 474h1v6h-1zM782 473h1v8h-1zM783 473h1v8h-1zM784 474h1v7h-1zM785 474h1v8h-1zM786 473h1v8h-1zM787 475h1v5h-1zM788 474h1v7h-1zM789 473h1v8h-1zM790 475h1v7h-1zM791 475h1v7h-1zM792 474h1v7h-1zM793 474h1v8h-1zM794 474h1v7h-1z" fill="#ffffff"/>
<path d="M745 475h1v1h-1zM746 476h1v1h-1zM747 478h1v2h-1zM749 478h1v1h-1zM753 476h1v1h-1zM755 476h1v2h-1zM757 475h1v1h-1zM758 476h1v1h-1zM760 475h1v1h-1zM761 478h1v1h-1zM762 479h1v1h-1zM764 477h1v2h-1zM766 476h1v2h-1zM772 479h1v1h-1zM773 475h1v1h-1zM774 477h1v1h-1zM775 476h1v2h-1zM780 477h1v1h-1zM783 475h1v1h-1zM789 475h1v2h-1zM794 477h1v1h-1z" fill="#000"/>
<path d="M794 475h1v1h-1zM795 475h1v1h-1zM796 475h1v1h-1zM794 476h1v1h-1zM794 477h1v1h-1zM794 478h1v1h-1zM796 478h1v1h-1zM794 479h1v1h-1zM796 479h1v1h-1zM794 480h1v1h-1zM796 480h1v1h-1zM794 481h1v1h-1zM795 481h1v1h-1zM796 481h1v1h-1zM798 475h1v1h-1zM799 475h1v1h-1zM800 475h1v1h-1zM798 476h1v1h-1zM801 476h1v1h-1zM798 477h1v1h-1zM801 477h1v1h-1zM798 478h1v1h-1zM799 478h1v1h-1zM800 478h1v1h-1zM798 479h1v1h-1zM801 479h1v1h-1zM798 480h1v1h-1zM801 480h1v1h-1zM798 481h1v1h-1zM799 481h1v1h-1zM800 481h1v1h-1zM804 475h1v1h-1zM803 476h1v1h-1zM804 476h1v1h-1zM804 477h1v1h-1zM804 478h1v1h-1zM804 479h1v1h-1zM804 480h1v1h-1zM804 481h1v1h-1zM807 475h1v1h-1zM806 476h1v1h-1zM807 476h1v1h-1zM807 477h1v1h-1zM807 478h1v1h-1zM807 479h1v1h-1zM807 480h1v1h-1zM807 481h1v1h-1zM809 475h1v1h-1zM810 475h1v1h-1zM811 475h1v1h-1zM809 476h1v1h-1zM811 476h1v1h-1zM809 477h1v1h-1zM811 477h1v1h-1zM809 478h1v1h-1zM810 478h1v1h-1zM811 478h1v1h-1zM809 479h1v1h-1zM811 479h1v1h-1zM809 480h1v1h-1zM811 480h1v1h-1zM809 481h1v1h-1zM810 481h1v1h-1zM811 481h1v1h-1zM813 475h1v1h-1zM815 475h1v1h-1zM813 476h1v1h-1zM815 476h1v1h-1zM813 477h1v1h-1zM815 477h1v1h-1zM813 478h1v1h-1zM814 478h1v1h-1zM815 478h1v1h-1zM815 479h1v1h-1zM815 480h1v1h-1zM815 481h1v1h-1zM817 478h1v1h-1zM818 478h1v1h-1zM819 478h1v1h-1zM821 475h1v1h-1zM822 475h1v1h-1zM823 475h1v1h-1zM821 476h1v1h-1zM823 476h1v1h-1zM821 477h1v1h-1zM823 477h1v1h-1zM821 478h1v1h-1zM822 478h1v1h-1zM823 478h1v1h-1zM821 479h1v1h-1zM823 479h1v1h-1zM821 480h1v1h-1zM823 480h1v1h-1zM821 481h1v1h-1zM822 481h1v1h-1zM823 481h1v1h-1zM825 475h1v1h-1zM826 475h1v1h-1zM827 475h1v1h-1zM825 476h1v1h-1zM827 476h1v1h-1zM825 477h1v1h-1zM827 477h1v1h-1zM825 478h1v1h-1zM827 478h1v1h-1zM825 479h1v1h-1zM827 479h1v1h-1zM825 480h1v1h-1zM827 480h1v1h-1zM825 481h1v1h-1zM826 481h1v1h-1zM827 481h1v1h-1z" fill="#ffffff"/>
<path d="M830 474h1v6h-1zM831 473h1v8h-1zM832 473h1v9h-1zM833 474h1v6h-1zM834 474h1v7h-1zM835 473h1v9h-1zM836 475h1v5h-1zM837 474h1v6h-1zM838 473h1v9h-1zM839 474h1v6h-1zM840 475h1v6h-1zM841 473h1v7h-1zM842 475h1v5h-1zM843 473h1v8h-1zM844 473h1v8h-1zM845 473h1v9h-1zM846 475h1v5h-1z" fill="#ffffff"/>
<path d="M830 477h1v1h-1zM831 478h1v1h-1zM832 478h1v1h-1zM834 477h1v2h-1zM835 477h1v2h-1zM836 476h1v1h-1zM839 477h1v1h-1zM842 479h1v1h-1zM843 475h1v1h-1zM844 475h1v2h-1z" fill="#000"/>
<rect x="847" y="480" width="1" height="2" fill="#ffffff"/>
<rect x="859" y="576" width="154" height="1" fill="#ffffff"/>
<rect x="859" y="583" width="154" height="1" fill="#ffffff"/>
<rect x="859" y="590" width="154" height="1" fill="#ffffff"/>
<rect x="859" y="597" width="154" height="1" fill="#ffffff"/>
<rect x="859" y="603" width="154" height="1" fill="#ffffff"/>
<rect x="859" y="610" width="154" height="1" fill="#ffffff"/>
<rect x="859" y="617" width="154" height="1" fill="#ffffff"/>
<rect x="859" y="624" width="154" height="1" fill="#ffffff"/>
<rect x="859" y="631" width="154" height="1" fill="#ffffff"/>
<rect x="859" y="637" width="154" height="1" fill="#ffffff"/>
<rect x="859" y="644" width="154" height="1" fill="#ffffff"/>
<rect x="859" y="651" width="154" height="1" fill="#ffffff"/>
<rect x="859" y="658" width="154" height="1" fill="#ffffff"/>
<rect x="859" y="664" width="154" height="1" fill="#ffffff"/>
<rect x="859" y="671" width="154" height="1" fill="#ffffff"/>
<rect x="859" y="576" width="1" height="96" fill="#ffffff"/>
<rect x="869" y="576" width="1" height="96" fill="#ffffff"/>
<rect x="896" y="576" width="1" height="96" fill="#ffffff"/>
<rect x="930" y="576" width="1" height="96" fill="#ffffff"/>
<rect x="946" y="576" width="1" height="96" fill="#ffffff"/>
<rect x="971" y="576" width="1" height="96" fill="#ffffff"/>
<rect x="992" y="576" width="1" height="96" fill="#ffffff"/>
<path d="M872 578h3v1h-3zM876 578h4v1h-4zM881 578h1v1h-1zM883 578h2v1h-2zM886 578h6v1h-6zM893 578h2v1h-2zM872 579h3v1h-3zM876 579h1v1h-1zM878 579h4v1h-4zM884 579h1v1h-1zM887 579h2v1h-2zM890 579h1v1h-1zM892 579h3v1h-3zM872 580h2v1h-2zM875 580h1v1h-1zM877 580h4v1h-4zM882 580h8v1h-8zM891 580h4v1h-4zM872 581h8v1h-8zM881 581h2v1h-2zM885 581h2v1h-2zM888 581h1v1h-1zM890 581h1v1h-1zM892 581h3v1h-3z" fill="#ffffff"/>
<path d="M895 578h16v1h-16zM895 579h16v1h-16zM895 580h5v1h-5zM901 580h10v1h-10zM895 581h8v1h-8zM904 581h7v1h-7z" fill="#ffffff"/>
<path d="M914 578h5v1h-5zM920 578h1v1h-1zM922 578h5v1h-5zM915 579h2v1h-2zM918 579h4v1h-4zM923 579h1v1h-1zM926 579h2v1h-2zM914 580h1v1h-1zM917 580h2v1h-2zM920 580h1v1h-1zM922 580h1v1h-1zM925 580h3v1h-3zM914 581h3v1h-3zM918 581h1v1h-1zM920 581h1v1h-1zM923 581h2v1h-2zM926 581h2v1h-2z" fill="#ffffff"/>
<path d="M937 578h2v1h-2zM937 579h2v1h-2zM937 580h2v1h-2z" fill="#ffffff"/>
<path d="M955 578h6v1h-6zM955 579h1v1h-1zM957 579h2v1h-2zM960 579h1v1h-1zM955 580h2v1h-2zM958 580h1v1h-1zM960 580h1v1h-1zM955 581h3v1h-3zM960 581h1v1h-1z" fill="#ffffff"/>
<path d="M907 585h6v1h-6zM907 586h6v1h-6zM907 587h3v1h-3zM911 587h2v1h-2zM907 588h1v1h-1zM909 588h4v1h-4z" fill="#ffffff"/>
<path d="M937 585h2v1h-2zM937 586h1v1h-1zM937 587h2v1h-2z" fill="#ffffff"/>
<path d="M956 585h5v1h-5zM957 586h3v1h-3zM956 587h1v1h-1zM959 587h2v1h-2zM955 588h1v1h-1zM957 588h4v1h-4z" fill="#ffffff"/>
<path d="M906 592h8v1h-8zM906 593h9v1h-9zM907 594h8v1h-8zM906 595h9v1h-9z" fill="#ffffff"/>
<path d="M937 593h2v1h-2zM937 594h2v1h-2z" fill="#ffffff"/>
<path d="M955 592h5v1h-5zM957 593h1v1h-1zM959 593h4v1h-4zM955 594h1v1h-1zM957 594h4v1h-4zM962 594h1v1h-1zM955 595h8v1h-8z" fill="#ffffff"/>
<path d="M906 599h9v1h-9zM906 600h9v1h-9zM906 601h9v1h-9zM906 602h2v1h-2zM909 602h5v1h-5z" fill="#ffffff"/>
<path d="M937 599h2v1h-2zM937 600h2v1h-2zM937 601h2v1h-2z" fill="#ffffff"/>
<path d="M955 599h6v1h-6zM955 600h1v1h-1zM957 600h1v1h-1zM959 600h1v1h-1zM956 601h3v1h-3zM960 601h1v1h-1zM956 602h3v1h-3zM960 602h1v1h-1z" fill="#ffffff"/>
<path d="M873 605h4v1h-4zM878 605h1v1h-1zM880 605h4v1h-4zM885 605h4v1h-4zM890 605h6v1h-6zM897 605h1v1h-1zM873 606h1v1h-1zM876 606h4v1h-4zM882 606h2v1h-2zM885 606h4v1h-4zM890 606h1v1h-1zM892 606h4v1h-4zM897 606h1v1h-1zM873 607h12v1h-12zM886 607h9v1h-9zM897 607h1v1h-1zM873 608h1v1h-1zM877 608h4v1h-4zM884 608h2v1h-2zM888 608h8v1h-8zM897 608h1v1h-1z" fill="#ffffff"/>
<path d="M898 605h17v1h-17zM898 606h1v1h-1zM900 606h4v1h-4zM905 606h11v1h-11zM898 607h10v1h-10zM909 607h7v1h-7zM898 608h3v1h-3zM902 608h14v1h-14z" fill="#ffffff"/>
<path d="M918 605h3v1h-3zM922 605h1v1h-1zM924 605h2v1h-2zM927 605h4v1h-4zM932 605h1v1h-1zM919 606h7v1h-7zM927 606h1v1h-1zM931 606h1v1h-1zM919 607h3v1h-3zM923 607h4v1h-4zM928 607h1v1h-1zM930 607h1v1h-1zM932 607h1v1h-1zM918 608h6v1h-6zM925 608h3v1h-3zM930 608h2v1h-2z" fill="#ffffff"/>
<path d="M937 605h1v1h-1zM937 606h2v1h-2zM937 607h1v1h-1z" fill="#ffffff"/>
<path d="M955 605h2v1h-2zM958 605h3v1h-3zM955 606h2v1h-2zM958 606h3v1h-3zM957 607h4v1h-4zM955 608h3v1h-3zM959 608h2v1h-2z" fill="#ffffff"/>
<path d="M907 612h8v1h-8zM906 613h9v1h-9zM906 614h8v1h-8zM906 615h3v1h-3zM910 615h5v1h-5z" fill="#ffffff"/>
<path d="M937 612h2v1h-2zM937 613h2v1h-2zM938 614h1v1h-1z" fill="#ffffff"/>
<path d="M957 612h2v1h-2zM960 612h1v1h-1zM955 613h6v1h-6zM956 614h1v1h-1zM958 614h3v1h-3zM955 615h6v1h-6z" fill="#ffffff"/>
<path d="M872 619h3v1h-3zM876 619h2v1h-2zM881 619h14v1h-14zM872 620h1v1h-1zM875 620h4v1h-4zM880 620h4v1h-4zM885 620h2v1h-2zM888 620h6v1h-6zM874 621h6v1h-6zM881 621h1v1h-1zM884 621h2v1h-2zM887 621h2v1h-2zM890 621h5v1h-5zM872 622h7v1h-7zM880 622h1v1h-1zM882 622h4v1h-4zM887 622h3v1h-3zM891 622h2v1h-2zM894 622h1v1h-1z" fill="#ffffff"/>
<path d="M895 619h16v1h-16zM895 620h2v1h-2zM898 620h13v1h-13zM895 621h16v1h-16zM895 622h13v1h-13zM909 622h1v1h-1z" fill="#ffffff"/>
<path d="M915 619h4v1h-4zM920 619h3v1h-3zM925 619h3v1h-3zM914 620h1v1h-1zM916 620h2v1h-2zM919 620h3v1h-3zM923 620h1v1h-1zM925 620h3v1h-3zM914 621h1v1h-1zM917 621h3v1h-3zM921 621h2v1h-2zM924 621h3v1h-3zM914 622h5v1h-5zM922 622h4v1h-4zM927 622h1v1h-1z" fill="#ffffff"/>
<path d="M937 619h2v1h-2zM937 620h1v1h-1zM937 621h2v1h-2z" fill="#ffffff"/>
<path d="M955 619h3v1h-3zM955 620h6v1h-6zM955 621h3v1h-3zM959 621h1v1h-1zM955 622h6v1h-6z" fill="#ffffff"/>
<path d="M872 626h2v1h-2zM875 626h2v1h-2zM878 626h2v1h-2zM881 626h1v1h-1zM883 626h4v1h-4zM888 626h3v1h-3zM892 626h1v1h-1zM873 627h5v1h-5zM879 627h1v1h-1zM881 627h3v1h-3zM886 627h3v1h-3zM890 627h3v1h-3zM872 628h2v1h-2zM875 628h6v1h-6zM882 628h1v1h-1zM884 628h1v1h-1zM887 628h6v1h-6zM872 629h2v1h-2zM875 629h3v1h-3zM879 629h1v1h-1zM883 629h3v1h-3zM887 629h1v1h-1zM889 629h2v1h-2zM892 629h1v1h-1z" fill="#ffffff"/>
<path d="M893 626h7v1h-7zM901 626h2v1h-2zM904 626h1v1h-1zM906 626h2v1h-2zM893 627h15v1h-15zM893 628h10v1h-10zM904 628h4v1h-4zM893 629h15v1h-15z" fill="#ffffff"/>
<path d="M911 626h2v1h-2zM914 626h1v1h-1zM916 626h1v1h-1zM918 626h1v1h-1zM920 626h3v1h-3zM911 627h6v1h-6zM918 627h4v1h-4zM911 628h3v1h-3zM915 628h3v1h-3zM919 628h1v1h-1zM921 628h1v1h-1zM923 628h1v1h-1zM912 629h4v1h-4zM917 629h7v1h-7z" fill="#ffffff"/>
<path d="M937 627h2v1h-2zM937 628h2v1h-2z" fill="#ffffff"/>
<path d="M957 626h3v1h-3zM956 627h4v1h-4zM955 628h3v1h-3zM955 629h1v1h-1zM958 629h2v1h-2z" fill="#ffffff"/>
<path d="M874 633h1v1h-1zM876 633h1v1h-1zM878 633h1v1h-1zM881 633h1v1h-1zM883 633h5v1h-5zM889 633h3v1h-3zM894 633h1v1h-1zM872 634h3v1h-3zM876 634h2v1h-2zM880 634h4v1h-4zM885 634h6v1h-6zM892 634h5v1h-5zM872 635h2v1h-2zM875 635h3v1h-3zM879 635h2v1h-2zM882 635h2v1h-2zM885 635h1v1h-1zM887 635h2v1h-2zM890 635h1v1h-1zM892 635h1v1h-1zM894 635h3v1h-3zM872 636h1v1h-1zM874 636h1v1h-1zM876 636h4v1h-4zM881 636h2v1h-2zM885 636h4v1h-4zM890 636h6v1h-6z" fill="#ffffff"/>
<path d="M897 633h2v1h-2zM900 633h12v1h-12zM913 633h2v1h-2zM897 634h11v1h-11zM909 634h4v1h-4zM914 634h1v1h-1zM897 635h17v1h-17zM898 636h2v1h-2zM901 636h7v1h-7zM909 636h2v1h-2zM912 636h3v1h-3z" fill="#ffffff"/>
<path d="M918 633h2v1h-2zM921 633h3v1h-3zM925 633h2v1h-2zM928 633h4v1h-4zM918 634h1v1h-1zM920 634h2v1h-2zM923 634h4v1h-4zM928 634h2v1h-2zM931 634h1v1h-1zM917 635h2v1h-2zM920 635h2v1h-2zM923 635h1v1h-1zM926 635h2v1h-2zM929 635h2v1h-2zM917 636h3v1h-3zM921 636h5v1h-5zM927 636h5v1h-5z" fill="#ffffff"/>
<path d="M938 633h1v1h-1zM938 634h1v1h-1zM937 635h2v1h-2z" fill="#ffffff"/>
<path d="M955 633h1v1h-1zM958 633h1v1h-1zM960 633h1v1h-1zM956 634h5v1h-5zM955 635h2v1h-2zM958 635h3v1h-3zM955 636h2v1h-2zM959 636h2v1h-2z" fill="#ffffff"/>
<path d="M872 639h1v1h-1zM874 639h8v1h-8zM883 639h1v1h-1zM885 639h7v1h-7zM893 639h1v1h-1zM872 640h2v1h-2zM875 640h5v1h-5zM881 640h5v1h-5zM890 640h1v1h-1zM892 640h4v1h-4zM872 641h8v1h-8zM881 641h8v1h-8zM894 641h2v1h-2zM872 642h2v1h-2zM876 642h5v1h-5zM882 642h4v1h-4zM888 642h4v1h-4zM893 642h1v1h-1z" fill="#ffffff"/>
<path d="M896 639h10v1h-10zM907 639h1v1h-1zM910 639h3v1h-3zM896 640h17v1h-17zM896 641h5v1h-5zM902 641h11v1h-11zM896 642h11v1h-11zM908 642h3v1h-3zM912 642h1v1h-1z" fill="#ffffff"/>
<path d="M915 639h1v1h-1zM918 639h1v1h-1zM920 639h2v1h-2zM924 639h3v1h-3zM928 639h1v1h-1zM915 640h1v1h-1zM917 640h1v1h-1zM919 640h3v1h-3zM923 640h1v1h-1zM926 640h1v1h-1zM928 640h1v1h-1zM915 641h2v1h-2zM920 641h1v1h-1zM922 641h1v1h-1zM924 641h3v1h-3zM928 641h1v1h-1zM915 642h5v1h-5zM921 642h1v1h-1zM924 642h5v1h-5z" fill="#ffffff"/>
<path d="M937 639h1v1h-1zM937 640h2v1h-2zM937 641h2v1h-2z" fill="#ffffff"/>
<path d="M957 639h3v1h-3zM955 640h2v1h-2zM959 640h2v1h-2zM955 641h6v1h-6zM955 642h2v1h-2zM958 642h1v1h-1z" fill="#ffffff"/>
<path d="M908 646h6v1h-6zM908 647h2v1h-2zM911 647h3v1h-3zM908 648h5v1h-5zM908 649h1v1h-1zM910 649h2v1h-2zM913 649h1v1h-1z" fill="#ffffff"/>
<path d="M937 646h2v1h-2zM937 647h2v1h-2zM937 648h1v1h-1z" fill="#ffffff"/>
<path d="M956 646h1v1h-1zM955 647h2v1h-2zM958 647h3v1h-3zM955 648h1v1h-1zM957 648h4v1h-4zM956 649h1v1h-1zM958 649h1v1h-1zM960 649h1v1h-1z" fill="#ffffff"/>
<path d="M908 653h6v1h-6zM909 654h5v1h-5zM908 655h6v1h-6zM908 656h1v1h-1zM910 656h4v1h-4z" fill="#ffffff"/>
<path d="M937 653h2v1h-2zM937 654h2v1h-2zM937 655h2v1h-2z" fill="#ffffff"/>
<path d="M955 653h3v1h-3zM959 653h2v1h-2zM956 654h5v1h-5zM955 655h3v1h-3zM959 655h1v1h-1zM955 656h1v1h-1zM957 656h1v1h-1zM960 656h1v1h-1z" fill="#ffffff"/>
<path d="M874 660h3v1h-3zM878 660h7v1h-7zM886 660h6v1h-6zM893 660h1v1h-1zM895 660h1v1h-1zM874 661h1v1h-1zM876 661h5v1h-5zM882 661h2v1h-2zM885 661h7v1h-7zM893 661h2v1h-2zM896 661h1v1h-1zM874 662h15v1h-15zM890 662h3v1h-3zM894 662h1v1h-1zM875 663h1v1h-1zM877 663h3v1h-3zM881 663h3v1h-3zM885 663h1v1h-1zM887 663h7v1h-7zM895 663h2v1h-2z" fill="#ffffff"/>
<path d="M897 660h13v1h-13zM911 660h2v1h-2zM897 661h1v1h-1zM899 661h3v1h-3zM903 661h8v1h-8zM912 661h1v1h-1zM897 662h2v1h-2zM900 662h3v1h-3zM904 662h1v1h-1zM906 662h4v1h-4zM911 662h2v1h-2zM898 663h15v1h-15z" fill="#ffffff"/>
<path d="M916 660h2v1h-2zM919 660h4v1h-4zM924 660h6v1h-6zM917 661h1v1h-1zM920 661h1v1h-1zM922 661h2v1h-2zM925 661h4v1h-4zM917 662h2v1h-2zM921 662h6v1h-6zM916 663h2v1h-2zM919 663h9v1h-9zM929 663h1v1h-1z" fill="#ffffff"/>
<path d="M937 660h2v1h-2zM937 661h2v1h-2zM937 662h2v1h-2z" fill="#ffffff"/>
<path d="M955 660h3v1h-3zM960 660h1v1h-1zM955 661h1v1h-1zM957 661h2v1h-2zM955 662h4v1h-4zM960 662h1v1h-1zM955 663h6v1h-6z" fill="#ffffff"/>
<rect x="864" y="660" width="2" height="3" fill="#ffffff"/>
<rect x="861" y="667" width="7" height="3" fill="#ffffff" shape-rendering="auto"/>
<rect x="875" y="667" width="5" height="4" fill="#ffffff" shape-rendering="auto"/>
<rect x="886" y="667" width="5" height="4" fill="#ffffff" shape-rendering="auto"/>
<rect x="905" y="667" width="5" height="4" fill="#ffffff" shape-rendering="auto"/>
<rect x="916" y="667" width="5" height="4" fill="#ffffff" shape-rendering="auto"/>
<rect x="933" y="667" width="5" height="4" fill="#ffffff" shape-rendering="auto"/>
<rect x="940" y="667" width="5" height="4" fill="#ffffff" shape-rendering="auto"/>
<rect x="953" y="667" width="5" height="4" fill="#ffffff" shape-rendering="auto"/>
<rect x="961" y="667" width="5" height="4" fill="#ffffff" shape-rendering="auto"/>
<rect x="977" y="667" width="5" height="4" fill="#ffffff" shape-rendering="auto"/>
<rect x="984" y="667" width="5" height="4" fill="#ffffff" shape-rendering="auto"/>
<rect x="997" y="667" width="5" height="4" fill="#ffffff" shape-rendering="auto"/>
<rect x="1004" y="667" width="5" height="4" fill="#ffffff" shape-rendering="auto"/>
<rect x="859" y="677" width="72" height="1" fill="#ffffff"/>
<rect x="859" y="683" width="72" height="1" fill="#ffffff"/>
<rect x="859" y="689" width="72" height="1" fill="#ffffff"/>
<rect x="859" y="695" width="72" height="1" fill="#ffffff"/>
<rect x="859" y="701" width="72" height="1" fill="#ffffff"/>
<rect x="859" y="707" width="72" height="1" fill="#ffffff"/>
<rect x="859" y="713" width="72" height="1" fill="#ffffff"/>
<rect x="867" y="671" width="1" height="25" fill="#ffffff"/>
<rect x="876" y="671" width="1" height="25" fill="#ffffff"/>
<rect x="884" y="671" width="1" height="25" fill="#ffffff"/>
<rect x="905" y="671" width="1" height="25" fill="#ffffff"/>
<rect x="915" y="671" width="1" height="25" fill="#ffffff"/>
<rect x="869" y="695" width="1" height="25" fill="#ffffff"/>
<rect x="879" y="695" width="1" height="25" fill="#ffffff"/>
<rect x="895" y="695" width="1" height="25" fill="#ffffff"/>
<rect x="905" y="695" width="1" height="25" fill="#ffffff"/>
<rect x="915" y="695" width="1" height="25" fill="#ffffff"/>
<rect x="930" y="671" width="1" height="49" fill="#ffffff"/>
<rect x="971" y="671" width="1" height="49" fill="#ffffff"/>
<rect x="859" y="671" width="1" height="49" fill="#ffffff"/>
<rect x="930" y="695" width="42" height="1" fill="#ffffff"/>
<rect x="930" y="703" width="42" height="1" fill="#ffffff"/>
<rect x="930" y="711" width="42" height="1" fill="#ffffff"/>
<rect x="951" y="695" width="1" height="17" fill="#ffffff"/>
<rect x="961" y="695" width="1" height="17" fill="#ffffff"/>
<rect x="934" y="703" width="1" height="9" fill="#ffffff"/>
<rect x="940" y="703" width="1" height="9" fill="#ffffff"/>
<rect x="945" y="703" width="1" height="9" fill="#ffffff"/>
<rect x="971" y="687" width="42" height="1" fill="#ffffff"/>
<rect x="971" y="703" width="42" height="1" fill="#ffffff"/>
<rect x="860" y="690" width="17" height="5" fill="#ffffff" shape-rendering="auto"/>
<rect x="877" y="690" width="2" height="5" fill="#ffffff" shape-rendering="auto"/>
<rect x="885" y="690" width="20" height="5" fill="#ffffff" shape-rendering="auto"/>
<rect x="906" y="690" width="9" height="5" fill="#ffffff" shape-rendering="auto"/>
<rect x="916" y="690" width="14" height="5" fill="#ffffff" shape-rendering="auto"/>
<rect x="861" y="697" width="7" height="4" fill="#ffffff" shape-rendering="auto"/>
<path d="M872 697h3v1h-3zM876 697h2v1h-2zM873 698h4v1h-4zM872 699h2v1h-2z" fill="#ffffff"/>
<rect x="896" y="697" width="9" height="4" fill="#ffffff" shape-rendering="auto"/>
<rect x="861" y="708" width="8" height="3" fill="#ffffff" shape-rendering="auto"/>
<rect x="861" y="714" width="8" height="4" fill="#ffffff" shape-rendering="auto"/>
<rect x="896" y="714" width="8" height="3" fill="#ffffff" shape-rendering="auto"/>
<path d="M945 679h2v1h-2zM948 679h1v1h-1zM950 679h2v1h-2zM953 679h1v1h-1zM956 679h1v1h-1zM945 680h3v1h-3zM949 680h8v1h-8zM945 681h1v1h-1zM947 681h2v1h-2zM951 681h6v1h-6zM945 682h8v1h-8zM955 682h2v1h-2zM945 683h1v1h-1zM947 683h7v1h-7zM956 683h1v1h-1z" fill="#ffffff"/>
<rect x="933" y="698" width="15" height="4" fill="#ffffff" shape-rendering="auto"/>
<rect x="953" y="698" width="7" height="4" fill="#ffffff" shape-rendering="auto"/>
<rect x="963" y="698" width="7" height="4" fill="#ffffff" shape-rendering="auto"/>
<path d="M963 705h2v1h-2zM968 705h1v1h-1zM963 706h6v1h-6zM963 707h6v1h-6z" fill="#ffffff"/>
<path d="M937 713h8v1h-8zM946 713h9v1h-9zM956 713h10v1h-10zM938 714h23v1h-23zM963 714h3v1h-3zM937 715h3v1h-3zM942 715h11v1h-11zM954 715h12v1h-12zM937 716h4v1h-4zM942 716h3v1h-3zM947 716h1v1h-1zM949 716h7v1h-7zM957 716h6v1h-6zM964 716h2v1h-2z" fill="#ffffff"/>
<rect x="975" y="678" width="36" height="4" fill="#ffffff" shape-rendering="auto"/>
<path d="M975 694h13v1h-13zM989 694h2v1h-2zM975 695h16v1h-16zM976 696h15v1h-15zM975 697h16v1h-16z" fill="#ffffff"/>
<path d="M991 694h3v1h-3zM991 695h3v1h-3zM991 696h3v1h-3zM992 697h1v1h-1z" fill="#ffffff"/>
<rect x="995" y="694" width="16" height="4" fill="#ffffff" shape-rendering="auto"/>
<path d="M990 708h1v1h-1zM993 708h1v1h-1zM990 709h3v1h-3zM994 709h1v1h-1zM990 710h2v1h-2zM993 710h2v1h-2zM990 711h2v1h-2zM993 711h2v1h-2z" fill="#ffffff"/>
</svg>
</div>
</body></html>
